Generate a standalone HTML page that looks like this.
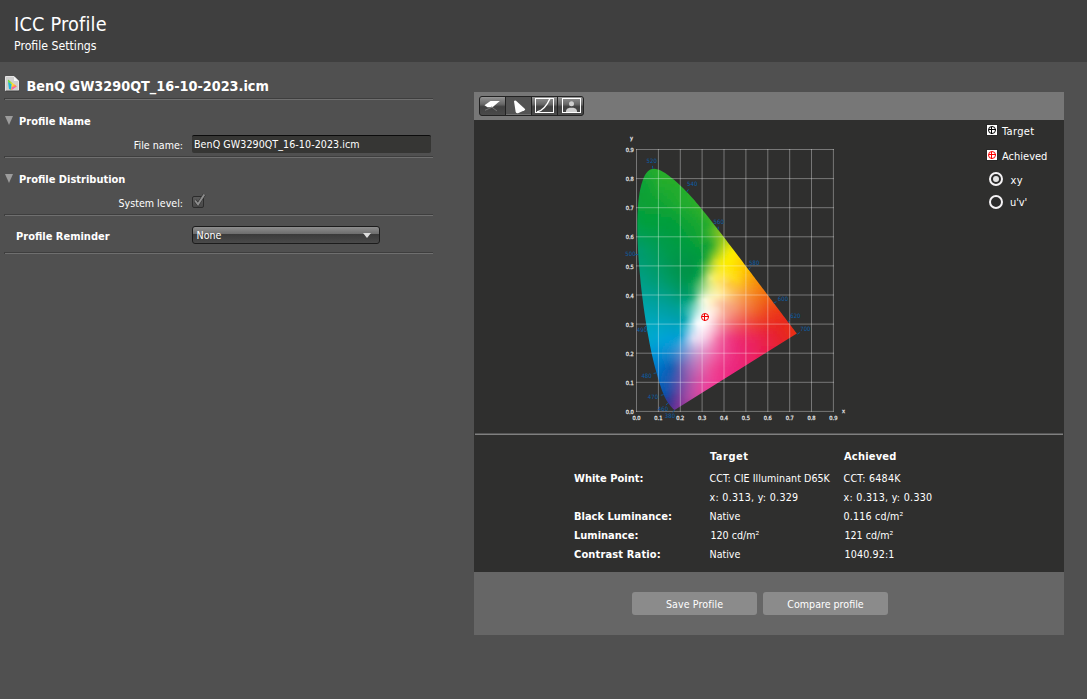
<!DOCTYPE html>
<html><head><meta charset="utf-8"><title>ICC Profile</title>
<style>
*{box-sizing:border-box;margin:0;padding:0}
html,body{width:1087px;height:699px;overflow:hidden;background:#505050}
body{position:relative;font-family:"DejaVu Sans Condensed","Liberation Sans",sans-serif;font-size:10.6px;color:#fff;line-height:13px}
.abs{position:absolute;white-space:nowrap}
.hdr{left:0;top:0;width:1087px;height:62px;background:#3f3f3f}
.t1{left:14px;top:12.5px;font-size:19.7px;line-height:24px;letter-spacing:.2px}
.t2{left:14px;top:39px;font-size:12.2px;line-height:15px}
.b{font-weight:bold;font-size:11px}
.sep{left:4px;width:429px;height:2px;border-top:1px solid #3e3e3e;border-left:1px solid #3e3e3e;background:#6f6f6f}
.lbl{text-align:right;right:904px}
.input{left:192px;top:135px;width:239px;height:18px;background:#363634;border-top:1px solid #0c0c0c;border-radius:2px}
.tri{left:5px;width:0;height:0;border-left:4.7px solid transparent;border-right:4.7px solid transparent;border-top:9px solid #9c9c9c}
.panel{left:474px;top:92px;width:590px;height:543px;background:#666}
.tb{left:474px;top:92px;width:590px;height:28px;background:#777}
.dark{left:474px;top:120px;width:590px;height:452px;background:#2f2f2e}
.cb{left:192px;top:196px;width:12px;height:12px;border:1px solid #2c2c2c;border-radius:2px;background:linear-gradient(#5a5a5a,#484848)}
.dd{left:192px;top:226px;width:188px;height:18px;border:1px solid #1c1c1c;border-radius:3px;background:linear-gradient(#8e8e8e 0,#6c6c6c 44%,#3a3a3a 45%,#4a4a4a 100%)}
.btn{top:592px;width:125px;height:23px;border-radius:3px;background:#8b8b8b;text-align:center;line-height:24px}
.grp{left:479px;top:96px;width:105px;height:20px;border:1px solid #222;border-radius:3px;background:#222;overflow:hidden}
.tbtn{top:0;width:25px;height:18px;background:linear-gradient(#9a9a9a 0,#8c8c8c 6%,#686868 40%,#414141 54%,#4a4a4a 100%)}
.tbtn.sel{background:#535353;border-bottom:1px solid #6e6e6e}
.ico{left:987px;width:10px;height:10px;background:#fff;box-shadow:0 0 0 1px #272727}
.radio{left:989px;width:14px;height:14px;border-radius:50%;border:2px solid #f4f2f4;background:#2b2b2b}
.hsep{left:475px;top:433px;width:588px;height:2px;background:linear-gradient(#565656 50%,#808080 50%)}
svg{position:absolute;overflow:visible}
.ax{font-size:5.7px;fill:#e4e4e4;stroke:#e4e4e4;stroke-width:.25px}
.wl{font-size:6px;fill:#0a5ea8}
</style></head><body>
<div class="abs hdr"></div>
<div class="abs t1">ICC Profile</div>
<div class="abs t2">Profile Settings</div>

<svg style="left:5px;top:76px" width="15" height="16" viewBox="0 0 15 16">
<defs><linearGradient id="ig" x1="0" y1="0" x2="1" y2="1"><stop offset="0" stop-color="#35e02a"/><stop offset=".5" stop-color="#ffe23a"/><stop offset="1" stop-color="#ff2a50"/></linearGradient></defs>
<path d="M0.5,0.5H9L13.5,5V14.5H0.5Z" fill="#cfcfcf" stroke="#e4e4e4"/>
<path d="M1,15H14" stroke="#3a3a3a" stroke-width="1"/>
<path d="M9,0.5V5H13.5Z" fill="#f6f6f6"/>
<path d="M3,3.6L11.8,10.3L6.5,13.9L4,13Z" fill="url(#ig)"/>
<path d="M3.2,6L6.6,8.3L6,13.8L4,13Z" fill="#19b6ea"/>
<path d="M7,11L11.5,10.5L7,13.5Z" fill="#f75cb8"/>
</svg>
<div class="abs b" id="title" style="left:26.5px;top:78px;font-size:14.3px;line-height:16px">BenQ GW3290QT_16-10-2023.icm</div>
<div class="abs sep" style="top:98px"></div>
<div class="abs tri" style="top:115.5px"></div>
<div class="abs b" id="pn" style="left:19px;top:115px">Profile Name</div>
<div class="abs lbl" id="fn" style="top:139px">File name:</div>
<div class="abs input"></div>
<div class="abs" id="fnv" style="left:194px;top:138px;letter-spacing:.07px">BenQ GW3290QT_16-10-2023.icm</div>
<div class="abs sep" style="top:156px"></div>
<div class="abs tri" style="top:173.5px"></div>
<div class="abs b" id="pd" style="left:19px;top:173px">Profile Distribution</div>
<div class="abs lbl" id="sl" style="top:197px">System level:</div>
<div class="abs cb"></div>
<svg style="left:192px;top:192px" width="16" height="16" viewBox="0 0 16 16"><path d="M3,8.5L6,12.3L12.3,2.5" fill="none" stroke="#333" stroke-width="3.2"/><path d="M3,8.5L6,12.3L12.3,2.5" fill="none" stroke="#8e8e8e" stroke-width="1.9"/></svg>
<div class="abs sep" style="top:214px"></div>
<div class="abs b" id="pr" style="left:16px;top:230px">Profile Reminder</div>
<div class="abs dd"></div>
<div class="abs" id="none" style="left:196.5px;top:229px">None</div>
<div class="abs" style="left:363px;top:233px;width:0;height:0;border-left:4px solid transparent;border-right:4px solid transparent;border-top:5px solid #dcdcdc"></div>
<div class="abs sep" style="top:252px"></div>

<div class="abs panel"></div>
<div class="abs tb"></div>
<div class="abs dark"></div>
<div class="abs hsep"></div>

<div class="abs grp">
 <div class="abs tbtn" style="left:0"></div>
 <div class="abs tbtn sel" style="left:26px"></div>
 <div class="abs tbtn" style="left:52px"></div>
 <div class="abs tbtn" style="left:78px"></div>
</div>
<svg style="left:479px;top:96px" width="105" height="20" viewBox="479 96 105 20">
 <path d="M484.5,105.2L490.5,101H499.8L492.5,107.2H487.5Z" fill="#fff"/>
 <path d="M485,110.3L492.5,107M491,106.5L497,111" stroke="#8a8a8a" stroke-width=".7" fill="none"/>
 <path d="M514,101.2Q514.5,100.3 516,100.8L525,109Q525.6,109.8 524.6,110.3L518,113.3Q516.2,113.6 515.7,112Z" fill="#fff"/>
 <rect x="535.5" y="98.5" width="18" height="14" fill="none" stroke="#fff"/>
 <path d="M537,112Q545,110 550,98.5" fill="none" stroke="#fff" stroke-width="1.4"/>
 <rect x="562.5" y="98.5" width="18" height="14" fill="none" stroke="#fff"/>
 <circle cx="571.5" cy="103.8" r="2.5" fill="#cfcfcf"/>
 <path d="M566,112V110.5Q566.5,108.3 569.5,107.8H573.5Q576.5,108.3 577,110.5V112Z" fill="#cfcfcf"/>
</svg>

<!-- chart -->
<svg style="left:600px;top:125px" width="270" height="305" viewBox="600 125 270 305">
<defs>
<clipPath id="loc"><path d="M674.6,410.0 L673.2,409.1 L672.1,407.8 L671.0,406.5 L669.8,405.1 L668.6,403.6 L667.7,402.3 L666.6,400.5 L665.7,399.0 L664.7,397.0 L663.7,394.6 L662.5,391.7 L661.8,390.0 L661.2,388.2 L660.5,386.1 L659.7,383.9 L659.0,381.5 L658.2,378.8 L657.4,375.9 L656.5,372.8 L655.6,369.4 L654.6,365.8 L653.6,361.8 L652.6,357.6 L651.5,353.0 L650.5,348.1 L649.5,342.9 L648.5,337.5 L647.4,331.7 L646.4,325.6 L645.4,319.2 L644.4,312.5 L643.4,305.6 L642.5,298.5 L641.6,291.3 L640.8,284.0 L640.1,276.7 L639.4,269.3 L638.8,262.0 L638.3,254.7 L637.9,247.5 L637.6,240.5 L637.4,233.8 L637.3,227.2 L637.3,220.8 L637.5,214.7 L637.8,208.8 L638.2,203.2 L638.8,198.0 L639.5,193.1 L640.4,188.6 L641.4,184.5 L642.5,180.9 L643.7,177.7 L645.0,175.1 L646.4,173.0 L647.9,171.3 L649.5,170.0 L651.1,169.2 L654.5,168.7 L657.9,169.4 L659.7,170.1 L661.5,171.0 L663.3,172.0 L665.1,173.1 L666.8,174.3 L668.6,175.6 L670.4,176.9 L672.1,178.2 L673.7,179.6 L675.4,181.0 L677.1,182.5 L678.7,183.9 L680.3,185.5 L681.9,187.0 L683.5,188.6 L685.1,190.2 L686.7,191.9 L688.3,193.6 L689.9,195.3 L691.5,197.0 L693.1,198.8 L694.7,200.6 L696.2,202.4 L697.8,204.3 L699.4,206.2 L700.9,208.0 L702.5,209.9 L704.1,211.9 L705.6,213.8 L707.2,215.7 L708.8,217.7 L710.3,219.7 L711.9,221.7 L713.4,223.7 L715.0,225.7 L716.6,227.7 L718.1,229.7 L719.7,231.7 L721.3,233.7 L722.8,235.8 L724.4,237.8 L725.9,239.8 L727.5,241.9 L729.0,243.9 L730.6,245.9 L732.1,248.0 L733.7,250.0 L735.2,252.0 L736.7,254.0 L738.2,256.0 L739.8,258.0 L741.3,260.0 L742.8,262.0 L744.2,264.0 L745.7,265.9 L747.2,267.9 L748.6,269.8 L750.1,271.7 L751.5,273.6 L752.9,275.5 L754.3,277.3 L755.7,279.2 L757.1,281.0 L758.4,282.7 L759.7,284.5 L761.1,286.2 L762.3,287.9 L763.6,289.6 L764.9,291.3 L766.1,292.9 L767.3,294.5 L768.4,296.0 L769.5,297.5 L770.6,298.9 L771.7,300.3 L772.7,301.7 L773.7,303.0 L774.7,304.3 L775.6,305.6 L777.5,308.0 L779.2,310.2 L780.7,312.3 L782.2,314.2 L783.5,316.0 L784.7,317.6 L785.8,319.1 L786.9,320.4 L788.2,322.2 L789.4,323.8 L790.5,325.2 L791.7,326.8 L792.7,328.2 L793.8,329.6 L794.8,331.0 L795.8,332.3 L796.8,333.6Z"/></clipPath>
<filter id="bl" x="-5%" y="-5%" width="110%" height="110%"><feGaussianBlur stdDeviation="0.8"/></filter>
<linearGradient id="cg0" gradientUnits="userSpaceOnUse" x1="648.0" x2="661.0" y1="0" y2="0"><stop offset="0.000" stop-color="#22ac2d"/><stop offset="0.500" stop-color="#25ad2c"/><stop offset="1.000" stop-color="#27ad2b"/></linearGradient>
<linearGradient id="cg1" gradientUnits="userSpaceOnUse" x1="644.0" x2="667.0" y1="0" y2="0"><stop offset="0.000" stop-color="#1ca930"/><stop offset="0.250" stop-color="#1faa2f"/><stop offset="0.500" stop-color="#24ac2c"/><stop offset="0.750" stop-color="#28ad2b"/><stop offset="1.000" stop-color="#29ae2a"/></linearGradient>
<linearGradient id="cg2" gradientUnits="userSpaceOnUse" x1="642.0" x2="671.5" y1="0" y2="0"><stop offset="0.000" stop-color="#18a732"/><stop offset="0.200" stop-color="#1ba931"/><stop offset="0.400" stop-color="#21ab2e"/><stop offset="0.600" stop-color="#26ad2c"/><stop offset="0.800" stop-color="#28ae2a"/><stop offset="1.000" stop-color="#29ae2a"/></linearGradient>
<linearGradient id="cg3" gradientUnits="userSpaceOnUse" x1="640.5" x2="675.0" y1="0" y2="0"><stop offset="0.000" stop-color="#15a634"/><stop offset="0.167" stop-color="#17a633"/><stop offset="0.333" stop-color="#1da930"/><stop offset="0.500" stop-color="#23ac2d"/><stop offset="0.667" stop-color="#26ad2b"/><stop offset="0.833" stop-color="#28ae2a"/><stop offset="1.000" stop-color="#29ae2a"/></linearGradient>
<linearGradient id="cg4" gradientUnits="userSpaceOnUse" x1="639.5" x2="678.5" y1="0" y2="0"><stop offset="0.000" stop-color="#11a436"/><stop offset="0.167" stop-color="#14a535"/><stop offset="0.333" stop-color="#1ca831"/><stop offset="0.500" stop-color="#23ac2d"/><stop offset="0.667" stop-color="#26ad2c"/><stop offset="0.833" stop-color="#27ad2b"/><stop offset="1.000" stop-color="#29ad2a"/></linearGradient>
<linearGradient id="cg5" gradientUnits="userSpaceOnUse" x1="638.5" x2="682.0" y1="0" y2="0"><stop offset="0.000" stop-color="#0ea237"/><stop offset="0.143" stop-color="#10a336"/><stop offset="0.286" stop-color="#17a633"/><stop offset="0.429" stop-color="#21ab2e"/><stop offset="0.571" stop-color="#24ac2c"/><stop offset="0.714" stop-color="#25ac2c"/><stop offset="0.857" stop-color="#27ad2b"/><stop offset="1.000" stop-color="#28ad2a"/></linearGradient>
<linearGradient id="cg6" gradientUnits="userSpaceOnUse" x1="638.0" x2="685.0" y1="0" y2="0"><stop offset="0.000" stop-color="#0da137"/><stop offset="0.125" stop-color="#0da237"/><stop offset="0.250" stop-color="#13a435"/><stop offset="0.375" stop-color="#1da930"/><stop offset="0.500" stop-color="#22ac2d"/><stop offset="0.625" stop-color="#22ac2d"/><stop offset="0.750" stop-color="#24ac2c"/><stop offset="0.875" stop-color="#26ad2b"/><stop offset="1.000" stop-color="#27ad2b"/></linearGradient>
<linearGradient id="cg7" gradientUnits="userSpaceOnUse" x1="637.5" x2="688.0" y1="0" y2="0"><stop offset="0.000" stop-color="#0ba137"/><stop offset="0.125" stop-color="#0da137"/><stop offset="0.250" stop-color="#12a434"/><stop offset="0.375" stop-color="#1ba830"/><stop offset="0.500" stop-color="#1faa2e"/><stop offset="0.625" stop-color="#21ab2e"/><stop offset="0.750" stop-color="#23ac2d"/><stop offset="0.875" stop-color="#25ad2c"/><stop offset="1.000" stop-color="#27ad2b"/></linearGradient>
<linearGradient id="cg8" gradientUnits="userSpaceOnUse" x1="636.5" x2="691.0" y1="0" y2="0"><stop offset="0.000" stop-color="#0aa037"/><stop offset="0.111" stop-color="#0ca137"/><stop offset="0.222" stop-color="#10a335"/><stop offset="0.333" stop-color="#16a632"/><stop offset="0.444" stop-color="#1ba830"/><stop offset="0.556" stop-color="#1eaa2f"/><stop offset="0.667" stop-color="#20ab2e"/><stop offset="0.778" stop-color="#23ac2d"/><stop offset="0.889" stop-color="#24ac2c"/><stop offset="1.000" stop-color="#26ad2c"/></linearGradient>
<linearGradient id="cg9" gradientUnits="userSpaceOnUse" x1="636.5" x2="694.0" y1="0" y2="0"><stop offset="0.000" stop-color="#0aa037"/><stop offset="0.100" stop-color="#0ba036"/><stop offset="0.200" stop-color="#0ea235"/><stop offset="0.300" stop-color="#13a433"/><stop offset="0.400" stop-color="#17a731"/><stop offset="0.500" stop-color="#1ba830"/><stop offset="0.600" stop-color="#1eaa2f"/><stop offset="0.700" stop-color="#21ab2e"/><stop offset="0.800" stop-color="#23ac2d"/><stop offset="0.900" stop-color="#25ac2c"/><stop offset="1.000" stop-color="#28ad2b"/></linearGradient>
<linearGradient id="cg10" gradientUnits="userSpaceOnUse" x1="636.0" x2="696.5" y1="0" y2="0"><stop offset="0.000" stop-color="#09a038"/><stop offset="0.100" stop-color="#0ba036"/><stop offset="0.200" stop-color="#0da235"/><stop offset="0.300" stop-color="#11a333"/><stop offset="0.400" stop-color="#14a532"/><stop offset="0.500" stop-color="#19a830"/><stop offset="0.600" stop-color="#1daa2f"/><stop offset="0.700" stop-color="#21ab2d"/><stop offset="0.800" stop-color="#23ac2d"/><stop offset="0.900" stop-color="#27ad2c"/><stop offset="1.000" stop-color="#2bad2a"/></linearGradient>
<linearGradient id="cg11" gradientUnits="userSpaceOnUse" x1="635.5" x2="699.0" y1="0" y2="0"><stop offset="0.000" stop-color="#09a038"/><stop offset="0.091" stop-color="#0aa037"/><stop offset="0.182" stop-color="#0ca135"/><stop offset="0.273" stop-color="#0ea234"/><stop offset="0.364" stop-color="#10a433"/><stop offset="0.455" stop-color="#14a632"/><stop offset="0.545" stop-color="#19a830"/><stop offset="0.636" stop-color="#1eaa2e"/><stop offset="0.727" stop-color="#23ac2d"/><stop offset="0.818" stop-color="#24ac2d"/><stop offset="0.909" stop-color="#29ad2b"/><stop offset="1.000" stop-color="#2dae2a"/></linearGradient>
<linearGradient id="cg12" gradientUnits="userSpaceOnUse" x1="635.5" x2="701.5" y1="0" y2="0"><stop offset="0.000" stop-color="#08a039"/><stop offset="0.091" stop-color="#0aa038"/><stop offset="0.182" stop-color="#0ba136"/><stop offset="0.273" stop-color="#0ca235"/><stop offset="0.364" stop-color="#0fa334"/><stop offset="0.455" stop-color="#13a533"/><stop offset="0.545" stop-color="#18a731"/><stop offset="0.636" stop-color="#1eaa2f"/><stop offset="0.727" stop-color="#22ab2d"/><stop offset="0.818" stop-color="#24ac2d"/><stop offset="0.909" stop-color="#2bad2b"/><stop offset="1.000" stop-color="#2fae29"/></linearGradient>
<linearGradient id="cg13" gradientUnits="userSpaceOnUse" x1="635.0" x2="704.0" y1="0" y2="0"><stop offset="0.000" stop-color="#07a03b"/><stop offset="0.083" stop-color="#08a039"/><stop offset="0.167" stop-color="#09a037"/><stop offset="0.250" stop-color="#0ba136"/><stop offset="0.333" stop-color="#0ca235"/><stop offset="0.417" stop-color="#0fa434"/><stop offset="0.500" stop-color="#13a533"/><stop offset="0.583" stop-color="#18a831"/><stop offset="0.667" stop-color="#1daa2f"/><stop offset="0.750" stop-color="#20ab2e"/><stop offset="0.833" stop-color="#25ac2c"/><stop offset="0.917" stop-color="#2dae2a"/><stop offset="1.000" stop-color="#31ae29"/></linearGradient>
<linearGradient id="cg14" gradientUnits="userSpaceOnUse" x1="635.0" x2="706.5" y1="0" y2="0"><stop offset="0.000" stop-color="#06a03c"/><stop offset="0.083" stop-color="#07a03b"/><stop offset="0.167" stop-color="#08a038"/><stop offset="0.250" stop-color="#09a137"/><stop offset="0.333" stop-color="#0aa236"/><stop offset="0.417" stop-color="#0da335"/><stop offset="0.500" stop-color="#10a534"/><stop offset="0.583" stop-color="#15a732"/><stop offset="0.667" stop-color="#1aa930"/><stop offset="0.750" stop-color="#1faa2f"/><stop offset="0.833" stop-color="#25ac2d"/><stop offset="0.917" stop-color="#2eae2a"/><stop offset="1.000" stop-color="#33af29"/></linearGradient>
<linearGradient id="cg15" gradientUnits="userSpaceOnUse" x1="635.0" x2="709.0" y1="0" y2="0"><stop offset="0.000" stop-color="#059f3e"/><stop offset="0.083" stop-color="#06a03c"/><stop offset="0.167" stop-color="#07a039"/><stop offset="0.250" stop-color="#08a138"/><stop offset="0.333" stop-color="#08a137"/><stop offset="0.417" stop-color="#0aa236"/><stop offset="0.500" stop-color="#0ea435"/><stop offset="0.583" stop-color="#13a633"/><stop offset="0.667" stop-color="#18a731"/><stop offset="0.750" stop-color="#1ea92f"/><stop offset="0.833" stop-color="#25ac2d"/><stop offset="0.917" stop-color="#2fae2a"/><stop offset="1.000" stop-color="#35af28"/></linearGradient>
<linearGradient id="cg16" gradientUnits="userSpaceOnUse" x1="634.5" x2="711.5" y1="0" y2="0"><stop offset="0.000" stop-color="#049f40"/><stop offset="0.077" stop-color="#05a03e"/><stop offset="0.154" stop-color="#06a03a"/><stop offset="0.231" stop-color="#06a039"/><stop offset="0.308" stop-color="#06a038"/><stop offset="0.385" stop-color="#07a138"/><stop offset="0.462" stop-color="#09a237"/><stop offset="0.538" stop-color="#0da335"/><stop offset="0.615" stop-color="#12a533"/><stop offset="0.692" stop-color="#18a731"/><stop offset="0.769" stop-color="#1ea92f"/><stop offset="0.846" stop-color="#26ac2d"/><stop offset="0.923" stop-color="#30ae2a"/><stop offset="1.000" stop-color="#39b028"/></linearGradient>
<linearGradient id="cg17" gradientUnits="userSpaceOnUse" x1="634.5" x2="713.5" y1="0" y2="0"><stop offset="0.000" stop-color="#049f43"/><stop offset="0.077" stop-color="#049f40"/><stop offset="0.154" stop-color="#06a03b"/><stop offset="0.231" stop-color="#05a03a"/><stop offset="0.308" stop-color="#04a03a"/><stop offset="0.385" stop-color="#04a03a"/><stop offset="0.462" stop-color="#06a039"/><stop offset="0.538" stop-color="#0aa236"/><stop offset="0.615" stop-color="#10a434"/><stop offset="0.692" stop-color="#16a632"/><stop offset="0.769" stop-color="#1ca830"/><stop offset="0.846" stop-color="#24ab2d"/><stop offset="0.923" stop-color="#31ae2a"/><stop offset="1.000" stop-color="#3cb028"/></linearGradient>
<linearGradient id="cg18" gradientUnits="userSpaceOnUse" x1="634.5" x2="716.0" y1="0" y2="0"><stop offset="0.000" stop-color="#039f45"/><stop offset="0.071" stop-color="#049f42"/><stop offset="0.143" stop-color="#05a03d"/><stop offset="0.214" stop-color="#04a03c"/><stop offset="0.286" stop-color="#039f3c"/><stop offset="0.357" stop-color="#029f3c"/><stop offset="0.429" stop-color="#019e3b"/><stop offset="0.500" stop-color="#06a039"/><stop offset="0.571" stop-color="#0ba236"/><stop offset="0.643" stop-color="#10a434"/><stop offset="0.714" stop-color="#16a631"/><stop offset="0.786" stop-color="#1ca82f"/><stop offset="0.857" stop-color="#24ab2d"/><stop offset="0.929" stop-color="#37af2a"/><stop offset="1.000" stop-color="#47b327"/></linearGradient>
<linearGradient id="cg19" gradientUnits="userSpaceOnUse" x1="634.5" x2="718.5" y1="0" y2="0"><stop offset="0.000" stop-color="#029f48"/><stop offset="0.071" stop-color="#039f45"/><stop offset="0.143" stop-color="#049f40"/><stop offset="0.214" stop-color="#039f3e"/><stop offset="0.286" stop-color="#029e3e"/><stop offset="0.357" stop-color="#009e3e"/><stop offset="0.429" stop-color="#009e3c"/><stop offset="0.500" stop-color="#05a03a"/><stop offset="0.571" stop-color="#09a137"/><stop offset="0.643" stop-color="#0fa334"/><stop offset="0.714" stop-color="#15a632"/><stop offset="0.786" stop-color="#1ca830"/><stop offset="0.857" stop-color="#24ab2e"/><stop offset="0.929" stop-color="#45b328"/><stop offset="1.000" stop-color="#5ab725"/></linearGradient>
<linearGradient id="cg20" gradientUnits="userSpaceOnUse" x1="634.5" x2="720.5" y1="0" y2="0"><stop offset="0.000" stop-color="#019e4c"/><stop offset="0.071" stop-color="#029f49"/><stop offset="0.143" stop-color="#039f44"/><stop offset="0.214" stop-color="#029f42"/><stop offset="0.286" stop-color="#019e41"/><stop offset="0.357" stop-color="#009d3f"/><stop offset="0.429" stop-color="#009e3d"/><stop offset="0.500" stop-color="#039f3b"/><stop offset="0.571" stop-color="#08a138"/><stop offset="0.643" stop-color="#0da335"/><stop offset="0.714" stop-color="#14a532"/><stop offset="0.786" stop-color="#1da830"/><stop offset="0.857" stop-color="#2ead2d"/><stop offset="0.929" stop-color="#59b827"/><stop offset="1.000" stop-color="#6ebc23"/></linearGradient>
<linearGradient id="cg21" gradientUnits="userSpaceOnUse" x1="634.5" x2="723.0" y1="0" y2="0"><stop offset="0.000" stop-color="#019e50"/><stop offset="0.067" stop-color="#019e4d"/><stop offset="0.133" stop-color="#029e49"/><stop offset="0.200" stop-color="#019e46"/><stop offset="0.267" stop-color="#009e44"/><stop offset="0.333" stop-color="#009d42"/><stop offset="0.400" stop-color="#009d3f"/><stop offset="0.467" stop-color="#019e3d"/><stop offset="0.533" stop-color="#059f3a"/><stop offset="0.600" stop-color="#09a137"/><stop offset="0.667" stop-color="#0fa334"/><stop offset="0.733" stop-color="#18a632"/><stop offset="0.800" stop-color="#27ab2f"/><stop offset="0.867" stop-color="#49b42a"/><stop offset="0.933" stop-color="#72bd24"/><stop offset="1.000" stop-color="#81c021"/></linearGradient>
<linearGradient id="cg22" gradientUnits="userSpaceOnUse" x1="634.5" x2="725.5" y1="0" y2="0"><stop offset="0.000" stop-color="#009e54"/><stop offset="0.067" stop-color="#019e51"/><stop offset="0.133" stop-color="#019e4d"/><stop offset="0.200" stop-color="#019e49"/><stop offset="0.267" stop-color="#009d46"/><stop offset="0.333" stop-color="#009d43"/><stop offset="0.400" stop-color="#009d41"/><stop offset="0.467" stop-color="#019e3e"/><stop offset="0.533" stop-color="#049f3b"/><stop offset="0.600" stop-color="#09a138"/><stop offset="0.667" stop-color="#10a334"/><stop offset="0.733" stop-color="#1ba731"/><stop offset="0.800" stop-color="#30ad2e"/><stop offset="0.867" stop-color="#59b829"/><stop offset="0.933" stop-color="#7fc121"/><stop offset="1.000" stop-color="#8fc51d"/></linearGradient>
<linearGradient id="cg23" gradientUnits="userSpaceOnUse" x1="634.5" x2="727.5" y1="0" y2="0"><stop offset="0.000" stop-color="#009d58"/><stop offset="0.062" stop-color="#009d56"/><stop offset="0.125" stop-color="#019d52"/><stop offset="0.188" stop-color="#009d4d"/><stop offset="0.250" stop-color="#009d4a"/><stop offset="0.312" stop-color="#009d46"/><stop offset="0.375" stop-color="#009c43"/><stop offset="0.438" stop-color="#009d40"/><stop offset="0.500" stop-color="#019d3d"/><stop offset="0.562" stop-color="#059f3a"/><stop offset="0.625" stop-color="#0ba137"/><stop offset="0.688" stop-color="#14a433"/><stop offset="0.750" stop-color="#21a831"/><stop offset="0.812" stop-color="#3db02d"/><stop offset="0.875" stop-color="#66bb27"/><stop offset="0.938" stop-color="#8ec61e"/><stop offset="1.000" stop-color="#9eca1a"/></linearGradient>
<linearGradient id="cg24" gradientUnits="userSpaceOnUse" x1="634.5" x2="730.0" y1="0" y2="0"><stop offset="0.000" stop-color="#009d5d"/><stop offset="0.062" stop-color="#009d5b"/><stop offset="0.125" stop-color="#009d56"/><stop offset="0.188" stop-color="#009d51"/><stop offset="0.250" stop-color="#009d4c"/><stop offset="0.312" stop-color="#009c48"/><stop offset="0.375" stop-color="#009c44"/><stop offset="0.438" stop-color="#009c41"/><stop offset="0.500" stop-color="#009d3e"/><stop offset="0.562" stop-color="#049e3b"/><stop offset="0.625" stop-color="#0ba137"/><stop offset="0.688" stop-color="#16a433"/><stop offset="0.750" stop-color="#22a831"/><stop offset="0.812" stop-color="#44b12d"/><stop offset="0.875" stop-color="#76c025"/><stop offset="0.938" stop-color="#a2cc1a"/><stop offset="1.000" stop-color="#b3d115"/></linearGradient>
<linearGradient id="cg25" gradientUnits="userSpaceOnUse" x1="635.0" x2="732.0" y1="0" y2="0"><stop offset="0.000" stop-color="#009c61"/><stop offset="0.062" stop-color="#009c5f"/><stop offset="0.125" stop-color="#009d5a"/><stop offset="0.188" stop-color="#009d54"/><stop offset="0.250" stop-color="#009c4e"/><stop offset="0.312" stop-color="#009c49"/><stop offset="0.375" stop-color="#009c45"/><stop offset="0.438" stop-color="#009c42"/><stop offset="0.500" stop-color="#009c3f"/><stop offset="0.562" stop-color="#039e3c"/><stop offset="0.625" stop-color="#0aa038"/><stop offset="0.688" stop-color="#18a532"/><stop offset="0.750" stop-color="#1ea533"/><stop offset="0.812" stop-color="#4db42c"/><stop offset="0.875" stop-color="#89c623"/><stop offset="0.938" stop-color="#b8d416"/><stop offset="1.000" stop-color="#c8d80f"/></linearGradient>
<linearGradient id="cg26" gradientUnits="userSpaceOnUse" x1="635.0" x2="734.5" y1="0" y2="0"><stop offset="0.000" stop-color="#009c65"/><stop offset="0.059" stop-color="#009c64"/><stop offset="0.118" stop-color="#009d5e"/><stop offset="0.176" stop-color="#009d58"/><stop offset="0.235" stop-color="#009c52"/><stop offset="0.294" stop-color="#009c4c"/><stop offset="0.353" stop-color="#009b48"/><stop offset="0.412" stop-color="#009b44"/><stop offset="0.471" stop-color="#009b41"/><stop offset="0.529" stop-color="#009c3e"/><stop offset="0.588" stop-color="#059e3b"/><stop offset="0.647" stop-color="#0ba037"/><stop offset="0.706" stop-color="#0fa037"/><stop offset="0.765" stop-color="#2daa30"/><stop offset="0.824" stop-color="#72bf28"/><stop offset="0.882" stop-color="#add21d"/><stop offset="0.941" stop-color="#d3dd0e"/><stop offset="1.000" stop-color="#dfdf08"/></linearGradient>
<linearGradient id="cg27" gradientUnits="userSpaceOnUse" x1="635.0" x2="737.0" y1="0" y2="0"><stop offset="0.000" stop-color="#009b6a"/><stop offset="0.059" stop-color="#009c69"/><stop offset="0.118" stop-color="#009d62"/><stop offset="0.176" stop-color="#009d5a"/><stop offset="0.235" stop-color="#009c54"/><stop offset="0.294" stop-color="#009c4d"/><stop offset="0.353" stop-color="#009b48"/><stop offset="0.412" stop-color="#009a45"/><stop offset="0.471" stop-color="#009a42"/><stop offset="0.529" stop-color="#009b40"/><stop offset="0.588" stop-color="#029c3c"/><stop offset="0.647" stop-color="#089e39"/><stop offset="0.706" stop-color="#1aa435"/><stop offset="0.765" stop-color="#4db42d"/><stop offset="0.824" stop-color="#98cb27"/><stop offset="0.882" stop-color="#cddd14"/><stop offset="0.941" stop-color="#ebe505"/><stop offset="1.000" stop-color="#f0e402"/></linearGradient>
<linearGradient id="cg28" gradientUnits="userSpaceOnUse" x1="635.0" x2="739.0" y1="0" y2="0"><stop offset="0.000" stop-color="#009b6d"/><stop offset="0.059" stop-color="#009b6e"/><stop offset="0.118" stop-color="#009d64"/><stop offset="0.176" stop-color="#009c5d"/><stop offset="0.235" stop-color="#009c56"/><stop offset="0.294" stop-color="#009b4f"/><stop offset="0.353" stop-color="#009a4a"/><stop offset="0.412" stop-color="#009946"/><stop offset="0.471" stop-color="#009943"/><stop offset="0.529" stop-color="#009a41"/><stop offset="0.588" stop-color="#009b3e"/><stop offset="0.647" stop-color="#099e39"/><stop offset="0.706" stop-color="#2fab33"/><stop offset="0.765" stop-color="#72c02a"/><stop offset="0.824" stop-color="#b7d61e"/><stop offset="0.882" stop-color="#e5e60b"/><stop offset="0.941" stop-color="#faeb00"/><stop offset="1.000" stop-color="#fae400"/></linearGradient>
<linearGradient id="cg29" gradientUnits="userSpaceOnUse" x1="635.5" x2="741.5" y1="0" y2="0"><stop offset="0.000" stop-color="#009b6e"/><stop offset="0.056" stop-color="#009b6d"/><stop offset="0.111" stop-color="#009c67"/><stop offset="0.167" stop-color="#009c60"/><stop offset="0.222" stop-color="#009b58"/><stop offset="0.278" stop-color="#009b52"/><stop offset="0.333" stop-color="#009a4c"/><stop offset="0.389" stop-color="#009848"/><stop offset="0.444" stop-color="#009845"/><stop offset="0.500" stop-color="#009843"/><stop offset="0.556" stop-color="#009940"/><stop offset="0.611" stop-color="#009b3d"/><stop offset="0.667" stop-color="#24a735"/><stop offset="0.722" stop-color="#69bd2c"/><stop offset="0.778" stop-color="#aed421"/><stop offset="0.833" stop-color="#dee50f"/><stop offset="0.889" stop-color="#fbec01"/><stop offset="0.944" stop-color="#ffe500"/><stop offset="1.000" stop-color="#fdde00"/></linearGradient>
<linearGradient id="cg30" gradientUnits="userSpaceOnUse" x1="635.5" x2="743.5" y1="0" y2="0"><stop offset="0.000" stop-color="#009b70"/><stop offset="0.056" stop-color="#009b6f"/><stop offset="0.111" stop-color="#009c69"/><stop offset="0.167" stop-color="#009c62"/><stop offset="0.222" stop-color="#009b5a"/><stop offset="0.278" stop-color="#009a53"/><stop offset="0.333" stop-color="#00994d"/><stop offset="0.389" stop-color="#009749"/><stop offset="0.444" stop-color="#009745"/><stop offset="0.500" stop-color="#009743"/><stop offset="0.556" stop-color="#009841"/><stop offset="0.611" stop-color="#029c3e"/><stop offset="0.667" stop-color="#3cae32"/><stop offset="0.722" stop-color="#93cb2b"/><stop offset="0.778" stop-color="#d0e019"/><stop offset="0.833" stop-color="#f1eb06"/><stop offset="0.889" stop-color="#ffea00"/><stop offset="0.944" stop-color="#ffde00"/><stop offset="1.000" stop-color="#fed700"/></linearGradient>
<linearGradient id="cg31" gradientUnits="userSpaceOnUse" x1="636.0" x2="746.0" y1="0" y2="0"><stop offset="0.000" stop-color="#009c72"/><stop offset="0.056" stop-color="#009c70"/><stop offset="0.111" stop-color="#009c6a"/><stop offset="0.167" stop-color="#009c63"/><stop offset="0.222" stop-color="#009b5c"/><stop offset="0.278" stop-color="#009954"/><stop offset="0.333" stop-color="#00984e"/><stop offset="0.389" stop-color="#009649"/><stop offset="0.444" stop-color="#009546"/><stop offset="0.500" stop-color="#009643"/><stop offset="0.556" stop-color="#009a41"/><stop offset="0.611" stop-color="#1aa43d"/><stop offset="0.667" stop-color="#69bd31"/><stop offset="0.722" stop-color="#c7dc2d"/><stop offset="0.778" stop-color="#ede90c"/><stop offset="0.833" stop-color="#feee00"/><stop offset="0.889" stop-color="#ffe500"/><stop offset="0.944" stop-color="#ffd600"/><stop offset="1.000" stop-color="#fed000"/></linearGradient>
<linearGradient id="cg32" gradientUnits="userSpaceOnUse" x1="636.0" x2="748.0" y1="0" y2="0"><stop offset="0.000" stop-color="#009c75"/><stop offset="0.053" stop-color="#009c73"/><stop offset="0.105" stop-color="#009c6d"/><stop offset="0.158" stop-color="#009c66"/><stop offset="0.211" stop-color="#009b5f"/><stop offset="0.263" stop-color="#009958"/><stop offset="0.316" stop-color="#009851"/><stop offset="0.368" stop-color="#00964c"/><stop offset="0.421" stop-color="#009447"/><stop offset="0.474" stop-color="#009544"/><stop offset="0.526" stop-color="#009843"/><stop offset="0.579" stop-color="#15a241"/><stop offset="0.632" stop-color="#57b83c"/><stop offset="0.684" stop-color="#afd435"/><stop offset="0.737" stop-color="#e9e81c"/><stop offset="0.789" stop-color="#fced04"/><stop offset="0.842" stop-color="#ffe900"/><stop offset="0.895" stop-color="#ffdd00"/><stop offset="0.947" stop-color="#ffcf00"/><stop offset="1.000" stop-color="#fec900"/></linearGradient>
<linearGradient id="cg33" gradientUnits="userSpaceOnUse" x1="636.0" x2="750.5" y1="0" y2="0"><stop offset="0.000" stop-color="#009c78"/><stop offset="0.053" stop-color="#009c75"/><stop offset="0.105" stop-color="#009c6f"/><stop offset="0.158" stop-color="#009c68"/><stop offset="0.211" stop-color="#009b61"/><stop offset="0.263" stop-color="#00995a"/><stop offset="0.316" stop-color="#009753"/><stop offset="0.368" stop-color="#00954c"/><stop offset="0.421" stop-color="#009448"/><stop offset="0.474" stop-color="#009445"/><stop offset="0.526" stop-color="#009a44"/><stop offset="0.579" stop-color="#2eab44"/><stop offset="0.632" stop-color="#80c643"/><stop offset="0.684" stop-color="#cddf38"/><stop offset="0.737" stop-color="#f6eb1b"/><stop offset="0.789" stop-color="#ffeb07"/><stop offset="0.842" stop-color="#ffe201"/><stop offset="0.895" stop-color="#ffd600"/><stop offset="0.947" stop-color="#fec800"/><stop offset="1.000" stop-color="#fdc000"/></linearGradient>
<linearGradient id="cg34" gradientUnits="userSpaceOnUse" x1="636.5" x2="752.5" y1="0" y2="0"><stop offset="0.000" stop-color="#009d7a"/><stop offset="0.053" stop-color="#009d77"/><stop offset="0.105" stop-color="#009c71"/><stop offset="0.158" stop-color="#009c6a"/><stop offset="0.211" stop-color="#009b63"/><stop offset="0.263" stop-color="#00995b"/><stop offset="0.316" stop-color="#009754"/><stop offset="0.368" stop-color="#00944d"/><stop offset="0.421" stop-color="#009348"/><stop offset="0.474" stop-color="#009545"/><stop offset="0.526" stop-color="#039d46"/><stop offset="0.579" stop-color="#4cb54b"/><stop offset="0.632" stop-color="#a6d34e"/><stop offset="0.684" stop-color="#e3e63d"/><stop offset="0.737" stop-color="#fceb23"/><stop offset="0.789" stop-color="#ffe711"/><stop offset="0.842" stop-color="#ffde06"/><stop offset="0.895" stop-color="#ffd003"/><stop offset="0.947" stop-color="#fdbf01"/><stop offset="1.000" stop-color="#fcb700"/></linearGradient>
<linearGradient id="cg35" gradientUnits="userSpaceOnUse" x1="636.5" x2="755.0" y1="0" y2="0"><stop offset="0.000" stop-color="#009d7e"/><stop offset="0.050" stop-color="#009d7b"/><stop offset="0.100" stop-color="#009d74"/><stop offset="0.150" stop-color="#009c6e"/><stop offset="0.200" stop-color="#009b67"/><stop offset="0.250" stop-color="#009a5f"/><stop offset="0.300" stop-color="#009757"/><stop offset="0.350" stop-color="#009550"/><stop offset="0.400" stop-color="#00944a"/><stop offset="0.450" stop-color="#009447"/><stop offset="0.500" stop-color="#009948"/><stop offset="0.550" stop-color="#37af4e"/><stop offset="0.600" stop-color="#9cd05b"/><stop offset="0.650" stop-color="#dee655"/><stop offset="0.700" stop-color="#f9eb3a"/><stop offset="0.750" stop-color="#ffe828"/><stop offset="0.800" stop-color="#ffe115"/><stop offset="0.850" stop-color="#ffd60a"/><stop offset="0.900" stop-color="#fec506"/><stop offset="0.950" stop-color="#fbb403"/><stop offset="1.000" stop-color="#faac01"/></linearGradient>
<linearGradient id="cg36" gradientUnits="userSpaceOnUse" x1="637.0" x2="757.0" y1="0" y2="0"><stop offset="0.000" stop-color="#009d81"/><stop offset="0.050" stop-color="#009d7e"/><stop offset="0.100" stop-color="#009d77"/><stop offset="0.150" stop-color="#009c70"/><stop offset="0.200" stop-color="#009b69"/><stop offset="0.250" stop-color="#009a61"/><stop offset="0.300" stop-color="#009859"/><stop offset="0.350" stop-color="#009551"/><stop offset="0.400" stop-color="#00944b"/><stop offset="0.450" stop-color="#009748"/><stop offset="0.500" stop-color="#0a9f4e"/><stop offset="0.550" stop-color="#5dbc58"/><stop offset="0.600" stop-color="#c8e173"/><stop offset="0.650" stop-color="#f3ed5a"/><stop offset="0.700" stop-color="#fee844"/><stop offset="0.750" stop-color="#ffe433"/><stop offset="0.800" stop-color="#ffdd19"/><stop offset="0.850" stop-color="#ffd00e"/><stop offset="0.900" stop-color="#fcbc0a"/><stop offset="0.950" stop-color="#faa906"/><stop offset="1.000" stop-color="#f8a204"/></linearGradient>
<linearGradient id="cg37" gradientUnits="userSpaceOnUse" x1="637.5" x2="759.5" y1="0" y2="0"><stop offset="0.000" stop-color="#009e84"/><stop offset="0.050" stop-color="#009e81"/><stop offset="0.100" stop-color="#009d79"/><stop offset="0.150" stop-color="#009d73"/><stop offset="0.200" stop-color="#009c6c"/><stop offset="0.250" stop-color="#009b63"/><stop offset="0.300" stop-color="#00985b"/><stop offset="0.350" stop-color="#009553"/><stop offset="0.400" stop-color="#00954c"/><stop offset="0.450" stop-color="#009b4b"/><stop offset="0.500" stop-color="#2fad59"/><stop offset="0.550" stop-color="#8ccc6b"/><stop offset="0.600" stop-color="#e6ed85"/><stop offset="0.650" stop-color="#fced50"/><stop offset="0.700" stop-color="#fee456"/><stop offset="0.750" stop-color="#ffda35"/><stop offset="0.800" stop-color="#ffda1a"/><stop offset="0.850" stop-color="#fdc513"/><stop offset="0.900" stop-color="#faaf0e"/><stop offset="0.950" stop-color="#f79d08"/><stop offset="1.000" stop-color="#f69606"/></linearGradient>
<linearGradient id="cg38" gradientUnits="userSpaceOnUse" x1="637.5" x2="761.5" y1="0" y2="0"><stop offset="0.000" stop-color="#009e88"/><stop offset="0.048" stop-color="#009e84"/><stop offset="0.095" stop-color="#009e7d"/><stop offset="0.143" stop-color="#009d77"/><stop offset="0.190" stop-color="#009c71"/><stop offset="0.238" stop-color="#009b69"/><stop offset="0.286" stop-color="#009960"/><stop offset="0.333" stop-color="#009658"/><stop offset="0.381" stop-color="#009651"/><stop offset="0.429" stop-color="#019c4e"/><stop offset="0.476" stop-color="#2dac5c"/><stop offset="0.524" stop-color="#77c770"/><stop offset="0.571" stop-color="#c9e282"/><stop offset="0.619" stop-color="#f5ed71"/><stop offset="0.667" stop-color="#fedf60"/><stop offset="0.714" stop-color="#fddd59"/><stop offset="0.762" stop-color="#fecd29"/><stop offset="0.810" stop-color="#fecd1f"/><stop offset="0.857" stop-color="#fbb619"/><stop offset="0.905" stop-color="#f8a212"/><stop offset="0.952" stop-color="#f6930b"/><stop offset="1.000" stop-color="#f58e07"/></linearGradient>
<linearGradient id="cg39" gradientUnits="userSpaceOnUse" x1="638.0" x2="764.0" y1="0" y2="0"><stop offset="0.000" stop-color="#009f8a"/><stop offset="0.048" stop-color="#009f87"/><stop offset="0.095" stop-color="#009e81"/><stop offset="0.143" stop-color="#009e7b"/><stop offset="0.190" stop-color="#009d75"/><stop offset="0.238" stop-color="#009b6d"/><stop offset="0.286" stop-color="#009964"/><stop offset="0.333" stop-color="#00975b"/><stop offset="0.381" stop-color="#009855"/><stop offset="0.429" stop-color="#11a258"/><stop offset="0.476" stop-color="#4bb86b"/><stop offset="0.524" stop-color="#98d380"/><stop offset="0.571" stop-color="#d9e88a"/><stop offset="0.619" stop-color="#f8ea7b"/><stop offset="0.667" stop-color="#fedf6e"/><stop offset="0.714" stop-color="#fdca4c"/><stop offset="0.762" stop-color="#fdc731"/><stop offset="0.810" stop-color="#fcbd27"/><stop offset="0.857" stop-color="#f9a91e"/><stop offset="0.905" stop-color="#f79815"/><stop offset="0.952" stop-color="#f58a0c"/><stop offset="1.000" stop-color="#f48508"/></linearGradient>
<linearGradient id="cg40" gradientUnits="userSpaceOnUse" x1="638.0" x2="766.5" y1="0" y2="0"><stop offset="0.000" stop-color="#009f8d"/><stop offset="0.048" stop-color="#009f8b"/><stop offset="0.095" stop-color="#009f86"/><stop offset="0.143" stop-color="#009e80"/><stop offset="0.190" stop-color="#009d79"/><stop offset="0.238" stop-color="#009c72"/><stop offset="0.286" stop-color="#009968"/><stop offset="0.333" stop-color="#00975f"/><stop offset="0.381" stop-color="#009a5a"/><stop offset="0.429" stop-color="#1fa863"/><stop offset="0.476" stop-color="#67c37b"/><stop offset="0.524" stop-color="#b2dd90"/><stop offset="0.571" stop-color="#e5ec94"/><stop offset="0.619" stop-color="#fbea88"/><stop offset="0.667" stop-color="#fedc74"/><stop offset="0.714" stop-color="#fdc851"/><stop offset="0.762" stop-color="#fcbf3c"/><stop offset="0.810" stop-color="#fab02f"/><stop offset="0.857" stop-color="#f79e22"/><stop offset="0.905" stop-color="#f58e17"/><stop offset="0.952" stop-color="#f4810c"/><stop offset="1.000" stop-color="#f37c08"/></linearGradient>
<linearGradient id="cg41" gradientUnits="userSpaceOnUse" x1="638.5" x2="768.5" y1="0" y2="0"><stop offset="0.000" stop-color="#00a090"/><stop offset="0.045" stop-color="#00a08f"/><stop offset="0.091" stop-color="#009f8b"/><stop offset="0.136" stop-color="#009f86"/><stop offset="0.182" stop-color="#009e80"/><stop offset="0.227" stop-color="#009d79"/><stop offset="0.273" stop-color="#009a70"/><stop offset="0.318" stop-color="#009866"/><stop offset="0.364" stop-color="#009960"/><stop offset="0.409" stop-color="#13a465"/><stop offset="0.455" stop-color="#5dc080"/><stop offset="0.500" stop-color="#acdc9a"/><stop offset="0.545" stop-color="#dfeca2"/><stop offset="0.591" stop-color="#f7ef9c"/><stop offset="0.636" stop-color="#ffe68c"/><stop offset="0.682" stop-color="#fed26e"/><stop offset="0.727" stop-color="#fcc153"/><stop offset="0.773" stop-color="#fab242"/><stop offset="0.818" stop-color="#f8a232"/><stop offset="0.864" stop-color="#f69224"/><stop offset="0.909" stop-color="#f48417"/><stop offset="0.955" stop-color="#f2780d"/><stop offset="1.000" stop-color="#f2720a"/></linearGradient>
<linearGradient id="cg42" gradientUnits="userSpaceOnUse" x1="639.0" x2="771.0" y1="0" y2="0"><stop offset="0.000" stop-color="#00a095"/><stop offset="0.045" stop-color="#00a094"/><stop offset="0.091" stop-color="#00a090"/><stop offset="0.136" stop-color="#009f8b"/><stop offset="0.182" stop-color="#009e85"/><stop offset="0.227" stop-color="#009d7f"/><stop offset="0.273" stop-color="#009b75"/><stop offset="0.318" stop-color="#00996b"/><stop offset="0.364" stop-color="#009a65"/><stop offset="0.409" stop-color="#1ea96f"/><stop offset="0.455" stop-color="#81ce96"/><stop offset="0.500" stop-color="#cce9b0"/><stop offset="0.545" stop-color="#eff1af"/><stop offset="0.591" stop-color="#fcf0a7"/><stop offset="0.636" stop-color="#ffe291"/><stop offset="0.682" stop-color="#fccc71"/><stop offset="0.727" stop-color="#fab85a"/><stop offset="0.773" stop-color="#f8a747"/><stop offset="0.818" stop-color="#f69635"/><stop offset="0.864" stop-color="#f48824"/><stop offset="0.909" stop-color="#f37a17"/><stop offset="0.955" stop-color="#f16d0e"/><stop offset="1.000" stop-color="#f0690c"/></linearGradient>
<linearGradient id="cg43" gradientUnits="userSpaceOnUse" x1="639.5" x2="773.0" y1="0" y2="0"><stop offset="0.000" stop-color="#00a19a"/><stop offset="0.045" stop-color="#00a199"/><stop offset="0.091" stop-color="#00a095"/><stop offset="0.136" stop-color="#009f8f"/><stop offset="0.182" stop-color="#009f8a"/><stop offset="0.227" stop-color="#009e84"/><stop offset="0.273" stop-color="#009b7a"/><stop offset="0.318" stop-color="#009b72"/><stop offset="0.364" stop-color="#009d6c"/><stop offset="0.409" stop-color="#35b37f"/><stop offset="0.455" stop-color="#addeb0"/><stop offset="0.500" stop-color="#e8f3c4"/><stop offset="0.545" stop-color="#f9f1b7"/><stop offset="0.591" stop-color="#feebac"/><stop offset="0.636" stop-color="#fdd68f"/><stop offset="0.682" stop-color="#fbc173"/><stop offset="0.727" stop-color="#f8ae5f"/><stop offset="0.773" stop-color="#f79d49"/><stop offset="0.818" stop-color="#f58d35"/><stop offset="0.864" stop-color="#f37f25"/><stop offset="0.909" stop-color="#f17118"/><stop offset="0.955" stop-color="#f06510"/><stop offset="1.000" stop-color="#f0600e"/></linearGradient>
<linearGradient id="cg44" gradientUnits="userSpaceOnUse" x1="639.5" x2="775.5" y1="0" y2="0"><stop offset="0.000" stop-color="#00a29f"/><stop offset="0.043" stop-color="#00a29e"/><stop offset="0.087" stop-color="#00a19a"/><stop offset="0.130" stop-color="#00a095"/><stop offset="0.174" stop-color="#009f90"/><stop offset="0.217" stop-color="#009e8b"/><stop offset="0.261" stop-color="#009d83"/><stop offset="0.304" stop-color="#009d7d"/><stop offset="0.348" stop-color="#04a27a"/><stop offset="0.391" stop-color="#34b489"/><stop offset="0.435" stop-color="#a6ddb6"/><stop offset="0.478" stop-color="#f4f9de"/><stop offset="0.522" stop-color="#fcf4c3"/><stop offset="0.565" stop-color="#fee3b1"/><stop offset="0.609" stop-color="#fdd39c"/><stop offset="0.652" stop-color="#fbc081"/><stop offset="0.696" stop-color="#f8af6b"/><stop offset="0.739" stop-color="#f79e57"/><stop offset="0.783" stop-color="#f58e42"/><stop offset="0.826" stop-color="#f38030"/><stop offset="0.870" stop-color="#f27321"/><stop offset="0.913" stop-color="#f06617"/><stop offset="0.957" stop-color="#ef5c12"/><stop offset="1.000" stop-color="#ef5810"/></linearGradient>
<linearGradient id="cg45" gradientUnits="userSpaceOnUse" x1="640.0" x2="777.5" y1="0" y2="0"><stop offset="0.000" stop-color="#00a3a4"/><stop offset="0.043" stop-color="#00a2a2"/><stop offset="0.087" stop-color="#00a29f"/><stop offset="0.130" stop-color="#00a19a"/><stop offset="0.174" stop-color="#00a095"/><stop offset="0.217" stop-color="#009f90"/><stop offset="0.261" stop-color="#009e89"/><stop offset="0.304" stop-color="#00a186"/><stop offset="0.348" stop-color="#1aab8b"/><stop offset="0.391" stop-color="#5dc5a3"/><stop offset="0.435" stop-color="#c0e8cc"/><stop offset="0.478" stop-color="#f9fade"/><stop offset="0.522" stop-color="#ffeec3"/><stop offset="0.565" stop-color="#fcd5ae"/><stop offset="0.609" stop-color="#fac095"/><stop offset="0.652" stop-color="#f9b27e"/><stop offset="0.696" stop-color="#f7a46a"/><stop offset="0.739" stop-color="#f59455"/><stop offset="0.783" stop-color="#f48540"/><stop offset="0.826" stop-color="#f2772e"/><stop offset="0.870" stop-color="#f16a20"/><stop offset="0.913" stop-color="#ef5d18"/><stop offset="0.957" stop-color="#ee5314"/><stop offset="1.000" stop-color="#ee5013"/></linearGradient>
<linearGradient id="cg46" gradientUnits="userSpaceOnUse" x1="640.5" x2="780.0" y1="0" y2="0"><stop offset="0.000" stop-color="#00a4a8"/><stop offset="0.043" stop-color="#00a3a7"/><stop offset="0.087" stop-color="#00a2a3"/><stop offset="0.130" stop-color="#00a19f"/><stop offset="0.174" stop-color="#00a09b"/><stop offset="0.217" stop-color="#009f95"/><stop offset="0.261" stop-color="#00a090"/><stop offset="0.304" stop-color="#0aa691"/><stop offset="0.348" stop-color="#34b69e"/><stop offset="0.391" stop-color="#80d3bb"/><stop offset="0.435" stop-color="#d3f0db"/><stop offset="0.478" stop-color="#faf8de"/><stop offset="0.522" stop-color="#fee5c6"/><stop offset="0.565" stop-color="#fbcbac"/><stop offset="0.609" stop-color="#f8b18d"/><stop offset="0.652" stop-color="#f7a67a"/><stop offset="0.696" stop-color="#f69866"/><stop offset="0.739" stop-color="#f48850"/><stop offset="0.783" stop-color="#f37a3b"/><stop offset="0.826" stop-color="#f16d2a"/><stop offset="0.870" stop-color="#ef5f1f"/><stop offset="0.913" stop-color="#ee5219"/><stop offset="0.957" stop-color="#ed4a15"/><stop offset="1.000" stop-color="#ed4714"/></linearGradient>
<linearGradient id="cg47" gradientUnits="userSpaceOnUse" x1="641.0" x2="782.0" y1="0" y2="0"><stop offset="0.000" stop-color="#00a5ad"/><stop offset="0.042" stop-color="#00a4ac"/><stop offset="0.083" stop-color="#00a3a7"/><stop offset="0.125" stop-color="#00a2a4"/><stop offset="0.167" stop-color="#00a1a1"/><stop offset="0.208" stop-color="#00a09d"/><stop offset="0.250" stop-color="#00a098"/><stop offset="0.292" stop-color="#0aa699"/><stop offset="0.333" stop-color="#35b7a7"/><stop offset="0.375" stop-color="#7cd3c1"/><stop offset="0.417" stop-color="#c7edde"/><stop offset="0.458" stop-color="#f4f8e7"/><stop offset="0.500" stop-color="#ffedd8"/><stop offset="0.542" stop-color="#fcdac3"/><stop offset="0.583" stop-color="#f8b497"/><stop offset="0.625" stop-color="#f7a381"/><stop offset="0.667" stop-color="#f59872"/><stop offset="0.708" stop-color="#f4885b"/><stop offset="0.750" stop-color="#f37946"/><stop offset="0.792" stop-color="#f16d33"/><stop offset="0.833" stop-color="#f06225"/><stop offset="0.875" stop-color="#ee531e"/><stop offset="0.917" stop-color="#ed4719"/><stop offset="0.958" stop-color="#ec4116"/><stop offset="1.000" stop-color="#ec3f15"/></linearGradient>
<linearGradient id="cg48" gradientUnits="userSpaceOnUse" x1="641.0" x2="784.5" y1="0" y2="0"><stop offset="0.000" stop-color="#00a5b1"/><stop offset="0.042" stop-color="#00a5b0"/><stop offset="0.083" stop-color="#00a4ac"/><stop offset="0.125" stop-color="#00a2a9"/><stop offset="0.167" stop-color="#00a1a6"/><stop offset="0.208" stop-color="#00a0a2"/><stop offset="0.250" stop-color="#00a09e"/><stop offset="0.292" stop-color="#0ca8a1"/><stop offset="0.333" stop-color="#45beb4"/><stop offset="0.375" stop-color="#95dcd2"/><stop offset="0.417" stop-color="#d9f4eb"/><stop offset="0.458" stop-color="#fbf8ee"/><stop offset="0.500" stop-color="#ffe8da"/><stop offset="0.542" stop-color="#fccfbd"/><stop offset="0.583" stop-color="#f8ab92"/><stop offset="0.625" stop-color="#f6997e"/><stop offset="0.667" stop-color="#f48b6c"/><stop offset="0.708" stop-color="#f37b56"/><stop offset="0.750" stop-color="#f26e41"/><stop offset="0.792" stop-color="#f0632f"/><stop offset="0.833" stop-color="#ee5624"/><stop offset="0.875" stop-color="#ed481e"/><stop offset="0.917" stop-color="#ec3e1a"/><stop offset="0.958" stop-color="#eb3a17"/><stop offset="1.000" stop-color="#eb3916"/></linearGradient>
<linearGradient id="cg49" gradientUnits="userSpaceOnUse" x1="641.5" x2="786.5" y1="0" y2="0"><stop offset="0.000" stop-color="#00a6b4"/><stop offset="0.042" stop-color="#00a6b3"/><stop offset="0.083" stop-color="#00a5b0"/><stop offset="0.125" stop-color="#00a3ae"/><stop offset="0.167" stop-color="#00a1ab"/><stop offset="0.208" stop-color="#00a0a7"/><stop offset="0.250" stop-color="#00a0a3"/><stop offset="0.292" stop-color="#0da9a7"/><stop offset="0.333" stop-color="#58c5c1"/><stop offset="0.375" stop-color="#b1e7e1"/><stop offset="0.417" stop-color="#ebfbf7"/><stop offset="0.458" stop-color="#fff6f2"/><stop offset="0.500" stop-color="#ffdfd7"/><stop offset="0.542" stop-color="#fbbfb3"/><stop offset="0.583" stop-color="#f7a08f"/><stop offset="0.625" stop-color="#f58d79"/><stop offset="0.667" stop-color="#f37d65"/><stop offset="0.708" stop-color="#f26f50"/><stop offset="0.750" stop-color="#f0623d"/><stop offset="0.792" stop-color="#ef572e"/><stop offset="0.833" stop-color="#ed4b24"/><stop offset="0.875" stop-color="#ec401f"/><stop offset="0.917" stop-color="#eb381b"/><stop offset="0.958" stop-color="#ea3419"/><stop offset="1.000" stop-color="#ea3318"/></linearGradient>
<linearGradient id="cg50" gradientUnits="userSpaceOnUse" x1="642.0" x2="789.0" y1="0" y2="0"><stop offset="0.000" stop-color="#00a6b7"/><stop offset="0.042" stop-color="#00a6b7"/><stop offset="0.083" stop-color="#00a5b5"/><stop offset="0.125" stop-color="#00a4b3"/><stop offset="0.167" stop-color="#00a2b1"/><stop offset="0.208" stop-color="#00a0ad"/><stop offset="0.250" stop-color="#00a0a8"/><stop offset="0.292" stop-color="#0ca8ac"/><stop offset="0.333" stop-color="#75cfd1"/><stop offset="0.375" stop-color="#d2f2f0"/><stop offset="0.417" stop-color="#fafefe"/><stop offset="0.458" stop-color="#ffeeee"/><stop offset="0.500" stop-color="#fdd0cd"/><stop offset="0.542" stop-color="#f8aea7"/><stop offset="0.583" stop-color="#f59288"/><stop offset="0.625" stop-color="#f37e72"/><stop offset="0.667" stop-color="#f26f5e"/><stop offset="0.708" stop-color="#f1614b"/><stop offset="0.750" stop-color="#ef5639"/><stop offset="0.792" stop-color="#ed4b2c"/><stop offset="0.833" stop-color="#ec4024"/><stop offset="0.875" stop-color="#eb381f"/><stop offset="0.917" stop-color="#ea321c"/><stop offset="0.958" stop-color="#e92f1a"/><stop offset="1.000" stop-color="#e92e1a"/></linearGradient>
<linearGradient id="cg51" gradientUnits="userSpaceOnUse" x1="642.5" x2="791.0" y1="0" y2="0"><stop offset="0.000" stop-color="#00a7bb"/><stop offset="0.040" stop-color="#00a7ba"/><stop offset="0.080" stop-color="#00a6ba"/><stop offset="0.120" stop-color="#00a4b9"/><stop offset="0.160" stop-color="#00a3b7"/><stop offset="0.200" stop-color="#00a1b4"/><stop offset="0.240" stop-color="#00a0af"/><stop offset="0.280" stop-color="#07a5b0"/><stop offset="0.320" stop-color="#6fccd5"/><stop offset="0.360" stop-color="#dbf3f5"/><stop offset="0.400" stop-color="#fcfefe"/><stop offset="0.440" stop-color="#fff0f2"/><stop offset="0.480" stop-color="#fdd1d4"/><stop offset="0.520" stop-color="#f8aeaf"/><stop offset="0.560" stop-color="#f59090"/><stop offset="0.600" stop-color="#f37b78"/><stop offset="0.640" stop-color="#f26b65"/><stop offset="0.680" stop-color="#f05d53"/><stop offset="0.720" stop-color="#ef5243"/><stop offset="0.760" stop-color="#ed4833"/><stop offset="0.800" stop-color="#ec3f2a"/><stop offset="0.840" stop-color="#eb3724"/><stop offset="0.880" stop-color="#ea3120"/><stop offset="0.920" stop-color="#e92d1d"/><stop offset="0.960" stop-color="#e82a1c"/><stop offset="1.000" stop-color="#e82a1c"/></linearGradient>
<linearGradient id="cg52" gradientUnits="userSpaceOnUse" x1="643.0" x2="793.5" y1="0" y2="0"><stop offset="0.000" stop-color="#00a8be"/><stop offset="0.040" stop-color="#00a8be"/><stop offset="0.080" stop-color="#00a7be"/><stop offset="0.120" stop-color="#00a5be"/><stop offset="0.160" stop-color="#00a3bd"/><stop offset="0.200" stop-color="#00a1ba"/><stop offset="0.240" stop-color="#00a3b8"/><stop offset="0.280" stop-color="#2bb2c3"/><stop offset="0.320" stop-color="#98d9e4"/><stop offset="0.360" stop-color="#f6fbfe"/><stop offset="0.400" stop-color="#fffcfc"/><stop offset="0.440" stop-color="#fce3ea"/><stop offset="0.480" stop-color="#f9bfc9"/><stop offset="0.520" stop-color="#f59aa3"/><stop offset="0.560" stop-color="#f37f87"/><stop offset="0.600" stop-color="#f16b72"/><stop offset="0.640" stop-color="#f05c5f"/><stop offset="0.680" stop-color="#ef5050"/><stop offset="0.720" stop-color="#ee4640"/><stop offset="0.760" stop-color="#ec3d31"/><stop offset="0.800" stop-color="#eb362b"/><stop offset="0.840" stop-color="#ea3025"/><stop offset="0.880" stop-color="#e92c21"/><stop offset="0.920" stop-color="#e8291e"/><stop offset="0.960" stop-color="#e8281c"/><stop offset="1.000" stop-color="#e82b1a"/></linearGradient>
<linearGradient id="cg53" gradientUnits="userSpaceOnUse" x1="643.5" x2="795.5" y1="0" y2="0"><stop offset="0.000" stop-color="#00a8c4"/><stop offset="0.040" stop-color="#00a8c3"/><stop offset="0.080" stop-color="#00a7c3"/><stop offset="0.120" stop-color="#00a5c3"/><stop offset="0.160" stop-color="#00a3c3"/><stop offset="0.200" stop-color="#00a1c0"/><stop offset="0.240" stop-color="#09a6c1"/><stop offset="0.280" stop-color="#49bcd1"/><stop offset="0.320" stop-color="#afdfec"/><stop offset="0.360" stop-color="#f3f6fc"/><stop offset="0.400" stop-color="#fef3f7"/><stop offset="0.440" stop-color="#fad6e2"/><stop offset="0.480" stop-color="#f7afc1"/><stop offset="0.520" stop-color="#f38a9d"/><stop offset="0.560" stop-color="#f16f83"/><stop offset="0.600" stop-color="#f05c6f"/><stop offset="0.640" stop-color="#ef4f5e"/><stop offset="0.680" stop-color="#ee454f"/><stop offset="0.720" stop-color="#ed3d40"/><stop offset="0.760" stop-color="#eb3535"/><stop offset="0.800" stop-color="#ea2f2e"/><stop offset="0.840" stop-color="#e92b28"/><stop offset="0.880" stop-color="#e82823"/><stop offset="0.920" stop-color="#e8281e"/><stop offset="0.960" stop-color="#e82b1a"/><stop offset="1.000" stop-color="#e82e17"/></linearGradient>
<linearGradient id="cg54" gradientUnits="userSpaceOnUse" x1="644.0" x2="798.0" y1="0" y2="0"><stop offset="0.000" stop-color="#00a8c6"/><stop offset="0.038" stop-color="#00a8c6"/><stop offset="0.077" stop-color="#00a7c7"/><stop offset="0.115" stop-color="#00a5c8"/><stop offset="0.154" stop-color="#00a3c8"/><stop offset="0.192" stop-color="#00a1c6"/><stop offset="0.231" stop-color="#08a5c7"/><stop offset="0.269" stop-color="#4cbbd7"/><stop offset="0.308" stop-color="#a9daec"/><stop offset="0.346" stop-color="#e9eef9"/><stop offset="0.385" stop-color="#fcecf5"/><stop offset="0.423" stop-color="#fbd4e4"/><stop offset="0.462" stop-color="#f7afc8"/><stop offset="0.500" stop-color="#f488a6"/><stop offset="0.538" stop-color="#f16b8b"/><stop offset="0.577" stop-color="#f05676"/><stop offset="0.615" stop-color="#ef4966"/><stop offset="0.654" stop-color="#ee4058"/><stop offset="0.692" stop-color="#ec394b"/><stop offset="0.731" stop-color="#eb3240"/><stop offset="0.769" stop-color="#ea2d37"/><stop offset="0.808" stop-color="#e92930"/><stop offset="0.846" stop-color="#e8262a"/><stop offset="0.885" stop-color="#e72723"/><stop offset="0.923" stop-color="#e8291d"/><stop offset="0.962" stop-color="#e82e17"/><stop offset="1.000" stop-color="#e73015"/></linearGradient>
<linearGradient id="cg55" gradientUnits="userSpaceOnUse" x1="644.5" x2="799.5" y1="0" y2="0"><stop offset="0.000" stop-color="#00a8c9"/><stop offset="0.038" stop-color="#00a8ca"/><stop offset="0.077" stop-color="#00a7cc"/><stop offset="0.115" stop-color="#00a5cd"/><stop offset="0.154" stop-color="#00a2cd"/><stop offset="0.192" stop-color="#00a0cb"/><stop offset="0.231" stop-color="#09a4cc"/><stop offset="0.269" stop-color="#62bedf"/><stop offset="0.308" stop-color="#bcdcf1"/><stop offset="0.346" stop-color="#ede9f7"/><stop offset="0.385" stop-color="#fbe0ef"/><stop offset="0.423" stop-color="#fac4db"/><stop offset="0.462" stop-color="#f69dbe"/><stop offset="0.500" stop-color="#f278a0"/><stop offset="0.538" stop-color="#f05b88"/><stop offset="0.577" stop-color="#ef4975"/><stop offset="0.615" stop-color="#ee3e66"/><stop offset="0.654" stop-color="#ed375a"/><stop offset="0.692" stop-color="#ec324f"/><stop offset="0.731" stop-color="#eb2d45"/><stop offset="0.769" stop-color="#e9283c"/><stop offset="0.808" stop-color="#e82534"/><stop offset="0.846" stop-color="#e7242c"/><stop offset="0.885" stop-color="#e72624"/><stop offset="0.923" stop-color="#e72a1d"/><stop offset="0.962" stop-color="#e72f17"/><stop offset="1.000" stop-color="#e73114"/></linearGradient>
<linearGradient id="cg56" gradientUnits="userSpaceOnUse" x1="645.0" x2="799.5" y1="0" y2="0"><stop offset="0.000" stop-color="#00a8cb"/><stop offset="0.038" stop-color="#00a8cc"/><stop offset="0.077" stop-color="#00a7d0"/><stop offset="0.115" stop-color="#00a4d1"/><stop offset="0.154" stop-color="#00a1d2"/><stop offset="0.192" stop-color="#009fcf"/><stop offset="0.231" stop-color="#0da2d0"/><stop offset="0.269" stop-color="#76bfe5"/><stop offset="0.308" stop-color="#cbddf3"/><stop offset="0.346" stop-color="#efe3f4"/><stop offset="0.385" stop-color="#f8d6ea"/><stop offset="0.423" stop-color="#f9b8d4"/><stop offset="0.462" stop-color="#f58eb7"/><stop offset="0.500" stop-color="#f16b9d"/><stop offset="0.538" stop-color="#ef4e88"/><stop offset="0.577" stop-color="#ee3e77"/><stop offset="0.615" stop-color="#ed3569"/><stop offset="0.654" stop-color="#ec305e"/><stop offset="0.692" stop-color="#eb2c54"/><stop offset="0.731" stop-color="#ea294c"/><stop offset="0.769" stop-color="#e92541"/><stop offset="0.808" stop-color="#e82338"/><stop offset="0.846" stop-color="#e7232f"/><stop offset="0.885" stop-color="#e72526"/><stop offset="0.923" stop-color="#e7291f"/><stop offset="0.962" stop-color="#e72e19"/><stop offset="1.000" stop-color="#e63016"/></linearGradient>
<linearGradient id="cg57" gradientUnits="userSpaceOnUse" x1="645.5" x2="795.0" y1="0" y2="0"><stop offset="0.000" stop-color="#00a8cd"/><stop offset="0.040" stop-color="#00a7ce"/><stop offset="0.080" stop-color="#00a5d3"/><stop offset="0.120" stop-color="#00a2d5"/><stop offset="0.160" stop-color="#00a0d7"/><stop offset="0.200" stop-color="#089ed3"/><stop offset="0.240" stop-color="#2fa7d8"/><stop offset="0.280" stop-color="#90c2e9"/><stop offset="0.320" stop-color="#dadcf3"/><stop offset="0.360" stop-color="#f0daf0"/><stop offset="0.400" stop-color="#f5c8e3"/><stop offset="0.440" stop-color="#f7a7cb"/><stop offset="0.480" stop-color="#f27aab"/><stop offset="0.520" stop-color="#f05c97"/><stop offset="0.560" stop-color="#ee4085"/><stop offset="0.600" stop-color="#ed3576"/><stop offset="0.640" stop-color="#ec2d6a"/><stop offset="0.680" stop-color="#ec2b60"/><stop offset="0.720" stop-color="#eb2858"/><stop offset="0.760" stop-color="#ea254f"/><stop offset="0.800" stop-color="#e92343"/><stop offset="0.840" stop-color="#e82139"/><stop offset="0.880" stop-color="#e62230"/><stop offset="0.920" stop-color="#e62527"/><stop offset="0.960" stop-color="#e72920"/><stop offset="1.000" stop-color="#e72b1d"/></linearGradient>
<linearGradient id="cg58" gradientUnits="userSpaceOnUse" x1="646.0" x2="790.0" y1="0" y2="0"><stop offset="0.000" stop-color="#00a5cf"/><stop offset="0.042" stop-color="#00a4d1"/><stop offset="0.083" stop-color="#01a2d4"/><stop offset="0.125" stop-color="#029fd6"/><stop offset="0.167" stop-color="#079dd7"/><stop offset="0.208" stop-color="#199ed5"/><stop offset="0.250" stop-color="#49a8db"/><stop offset="0.292" stop-color="#9abfe7"/><stop offset="0.333" stop-color="#d7d1ed"/><stop offset="0.375" stop-color="#eccde9"/><stop offset="0.417" stop-color="#efb8db"/><stop offset="0.458" stop-color="#f396c2"/><stop offset="0.500" stop-color="#f16fa7"/><stop offset="0.542" stop-color="#f05294"/><stop offset="0.583" stop-color="#ee3b84"/><stop offset="0.625" stop-color="#ed2f76"/><stop offset="0.667" stop-color="#ec296b"/><stop offset="0.708" stop-color="#eb2762"/><stop offset="0.750" stop-color="#ea255a"/><stop offset="0.792" stop-color="#ea2351"/><stop offset="0.833" stop-color="#e92145"/><stop offset="0.875" stop-color="#e8203b"/><stop offset="0.917" stop-color="#e72231"/><stop offset="0.958" stop-color="#e72529"/><stop offset="1.000" stop-color="#e72625"/></linearGradient>
<linearGradient id="cg59" gradientUnits="userSpaceOnUse" x1="646.5" x2="785.5" y1="0" y2="0"><stop offset="0.000" stop-color="#00a1d1"/><stop offset="0.043" stop-color="#00a1d2"/><stop offset="0.087" stop-color="#029ed5"/><stop offset="0.130" stop-color="#059bd6"/><stop offset="0.174" stop-color="#1099d5"/><stop offset="0.217" stop-color="#2a9cd6"/><stop offset="0.261" stop-color="#5da6db"/><stop offset="0.304" stop-color="#a0b8e3"/><stop offset="0.348" stop-color="#d2c2e6"/><stop offset="0.391" stop-color="#e6bce1"/><stop offset="0.435" stop-color="#eda6d1"/><stop offset="0.478" stop-color="#f085b9"/><stop offset="0.522" stop-color="#f064a3"/><stop offset="0.565" stop-color="#ef4a91"/><stop offset="0.609" stop-color="#ee3782"/><stop offset="0.652" stop-color="#ec2c76"/><stop offset="0.696" stop-color="#ec276b"/><stop offset="0.739" stop-color="#eb2462"/><stop offset="0.783" stop-color="#ea225a"/><stop offset="0.826" stop-color="#e92150"/><stop offset="0.870" stop-color="#e92045"/><stop offset="0.913" stop-color="#e8203b"/><stop offset="0.957" stop-color="#e72132"/><stop offset="1.000" stop-color="#e7232e"/></linearGradient>
<linearGradient id="cg60" gradientUnits="userSpaceOnUse" x1="647.0" x2="780.5" y1="0" y2="0"><stop offset="0.000" stop-color="#009ed2"/><stop offset="0.045" stop-color="#009dd4"/><stop offset="0.091" stop-color="#0399d4"/><stop offset="0.136" stop-color="#0995d4"/><stop offset="0.182" stop-color="#1994d4"/><stop offset="0.227" stop-color="#3897d4"/><stop offset="0.273" stop-color="#6aa1d9"/><stop offset="0.318" stop-color="#a3aede"/><stop offset="0.364" stop-color="#cdb4de"/><stop offset="0.409" stop-color="#e2abd7"/><stop offset="0.455" stop-color="#eb96c7"/><stop offset="0.500" stop-color="#ef78b2"/><stop offset="0.545" stop-color="#f05c9f"/><stop offset="0.591" stop-color="#ef448e"/><stop offset="0.636" stop-color="#ed3481"/><stop offset="0.682" stop-color="#ec2a76"/><stop offset="0.727" stop-color="#ec256c"/><stop offset="0.773" stop-color="#eb2363"/><stop offset="0.818" stop-color="#ea215a"/><stop offset="0.864" stop-color="#ea1f50"/><stop offset="0.909" stop-color="#e91f46"/><stop offset="0.955" stop-color="#e81f3c"/><stop offset="1.000" stop-color="#e82037"/></linearGradient>
<linearGradient id="cg61" gradientUnits="userSpaceOnUse" x1="648.0" x2="775.5" y1="0" y2="0"><stop offset="0.000" stop-color="#0099d4"/><stop offset="0.048" stop-color="#0198d4"/><stop offset="0.095" stop-color="#0493d3"/><stop offset="0.143" stop-color="#0e8fd2"/><stop offset="0.190" stop-color="#238ed1"/><stop offset="0.238" stop-color="#4692d1"/><stop offset="0.286" stop-color="#769bd5"/><stop offset="0.333" stop-color="#a7a3d8"/><stop offset="0.381" stop-color="#cca5d6"/><stop offset="0.429" stop-color="#e09bcd"/><stop offset="0.476" stop-color="#ea86be"/><stop offset="0.524" stop-color="#ee6cac"/><stop offset="0.571" stop-color="#ef539a"/><stop offset="0.619" stop-color="#ee3f8c"/><stop offset="0.667" stop-color="#ed317f"/><stop offset="0.714" stop-color="#ec2975"/><stop offset="0.762" stop-color="#eb256c"/><stop offset="0.810" stop-color="#eb2263"/><stop offset="0.857" stop-color="#ea205a"/><stop offset="0.905" stop-color="#ea1e50"/><stop offset="0.952" stop-color="#e91e46"/><stop offset="1.000" stop-color="#e91e41"/></linearGradient>
<linearGradient id="cg62" gradientUnits="userSpaceOnUse" x1="648.5" x2="771.0" y1="0" y2="0"><stop offset="0.000" stop-color="#0095d4"/><stop offset="0.050" stop-color="#0192d3"/><stop offset="0.100" stop-color="#058dd1"/><stop offset="0.150" stop-color="#1189ce"/><stop offset="0.200" stop-color="#2987cd"/><stop offset="0.250" stop-color="#508bcd"/><stop offset="0.300" stop-color="#7e92d0"/><stop offset="0.350" stop-color="#aa98d1"/><stop offset="0.400" stop-color="#cb98ce"/><stop offset="0.450" stop-color="#df8cc4"/><stop offset="0.500" stop-color="#e979b6"/><stop offset="0.550" stop-color="#ee61a5"/><stop offset="0.600" stop-color="#ef4b95"/><stop offset="0.650" stop-color="#ee3a88"/><stop offset="0.700" stop-color="#ed2e7d"/><stop offset="0.750" stop-color="#ec2874"/><stop offset="0.800" stop-color="#eb246b"/><stop offset="0.850" stop-color="#eb2162"/><stop offset="0.900" stop-color="#ea1f59"/><stop offset="0.950" stop-color="#ea1e4f"/><stop offset="1.000" stop-color="#ea1d4a"/></linearGradient>
<linearGradient id="cg63" gradientUnits="userSpaceOnUse" x1="649.0" x2="766.0" y1="0" y2="0"><stop offset="0.000" stop-color="#008fd2"/><stop offset="0.050" stop-color="#008dd1"/><stop offset="0.100" stop-color="#0587ce"/><stop offset="0.150" stop-color="#1082cb"/><stop offset="0.200" stop-color="#287fc8"/><stop offset="0.250" stop-color="#4c81c7"/><stop offset="0.300" stop-color="#7787c9"/><stop offset="0.350" stop-color="#a08ccb"/><stop offset="0.400" stop-color="#c18dc9"/><stop offset="0.450" stop-color="#d886c2"/><stop offset="0.500" stop-color="#e577b6"/><stop offset="0.550" stop-color="#ec63a7"/><stop offset="0.600" stop-color="#ee5099"/><stop offset="0.650" stop-color="#ee3f8d"/><stop offset="0.700" stop-color="#ed3283"/><stop offset="0.750" stop-color="#ec2b7a"/><stop offset="0.800" stop-color="#eb2671"/><stop offset="0.850" stop-color="#eb2369"/><stop offset="0.900" stop-color="#eb2060"/><stop offset="0.950" stop-color="#eb1e58"/><stop offset="1.000" stop-color="#ea1e54"/></linearGradient>
<linearGradient id="cg64" gradientUnits="userSpaceOnUse" x1="650.0" x2="761.5" y1="0" y2="0"><stop offset="0.000" stop-color="#0089cf"/><stop offset="0.053" stop-color="#0086ce"/><stop offset="0.105" stop-color="#057fcb"/><stop offset="0.158" stop-color="#1279c6"/><stop offset="0.211" stop-color="#2d77c2"/><stop offset="0.263" stop-color="#5579c1"/><stop offset="0.316" stop-color="#817ec4"/><stop offset="0.368" stop-color="#a783c5"/><stop offset="0.421" stop-color="#c583c2"/><stop offset="0.474" stop-color="#db7bba"/><stop offset="0.526" stop-color="#e76bad"/><stop offset="0.579" stop-color="#ec59a0"/><stop offset="0.632" stop-color="#ee4794"/><stop offset="0.684" stop-color="#ed3989"/><stop offset="0.737" stop-color="#ec2f81"/><stop offset="0.789" stop-color="#ec2978"/><stop offset="0.842" stop-color="#eb2670"/><stop offset="0.895" stop-color="#eb2368"/><stop offset="0.947" stop-color="#eb205f"/><stop offset="1.000" stop-color="#eb1e5b"/></linearGradient>
<linearGradient id="cg65" gradientUnits="userSpaceOnUse" x1="650.5" x2="756.5" y1="0" y2="0"><stop offset="0.000" stop-color="#0083cd"/><stop offset="0.056" stop-color="#0080cc"/><stop offset="0.111" stop-color="#0378c8"/><stop offset="0.167" stop-color="#1071c1"/><stop offset="0.222" stop-color="#2f6dbc"/><stop offset="0.278" stop-color="#5c6fbb"/><stop offset="0.333" stop-color="#8875be"/><stop offset="0.389" stop-color="#ab7ac0"/><stop offset="0.444" stop-color="#c87abc"/><stop offset="0.500" stop-color="#dd71b4"/><stop offset="0.556" stop-color="#e862a7"/><stop offset="0.611" stop-color="#ed509a"/><stop offset="0.667" stop-color="#ed408f"/><stop offset="0.722" stop-color="#ed3487"/><stop offset="0.778" stop-color="#ec2c7f"/><stop offset="0.833" stop-color="#eb2878"/><stop offset="0.889" stop-color="#eb2670"/><stop offset="0.944" stop-color="#eb2267"/><stop offset="1.000" stop-color="#eb2063"/></linearGradient>
<linearGradient id="cg66" gradientUnits="userSpaceOnUse" x1="651.5" x2="751.5" y1="0" y2="0"><stop offset="0.000" stop-color="#007dca"/><stop offset="0.059" stop-color="#0079c9"/><stop offset="0.118" stop-color="#0270c4"/><stop offset="0.176" stop-color="#0f68bb"/><stop offset="0.235" stop-color="#3465b5"/><stop offset="0.294" stop-color="#6667b5"/><stop offset="0.353" stop-color="#916db9"/><stop offset="0.412" stop-color="#b073bc"/><stop offset="0.471" stop-color="#cd71b7"/><stop offset="0.529" stop-color="#e068ad"/><stop offset="0.588" stop-color="#e958a0"/><stop offset="0.647" stop-color="#ed4894"/><stop offset="0.706" stop-color="#ed398b"/><stop offset="0.765" stop-color="#ec3084"/><stop offset="0.824" stop-color="#eb2a7e"/><stop offset="0.882" stop-color="#eb2677"/><stop offset="0.941" stop-color="#eb246f"/><stop offset="1.000" stop-color="#eb236b"/></linearGradient>
<linearGradient id="cg67" gradientUnits="userSpaceOnUse" x1="652.0" x2="747.0" y1="0" y2="0"><stop offset="0.000" stop-color="#0079c8"/><stop offset="0.062" stop-color="#0074c7"/><stop offset="0.125" stop-color="#036ac1"/><stop offset="0.188" stop-color="#1061b6"/><stop offset="0.250" stop-color="#3b5eb0"/><stop offset="0.312" stop-color="#6f61b1"/><stop offset="0.375" stop-color="#9767b5"/><stop offset="0.438" stop-color="#b56cb8"/><stop offset="0.500" stop-color="#d16ab2"/><stop offset="0.562" stop-color="#e35fa8"/><stop offset="0.625" stop-color="#eb4f9a"/><stop offset="0.688" stop-color="#ed4090"/><stop offset="0.750" stop-color="#ec3388"/><stop offset="0.812" stop-color="#ec2c82"/><stop offset="0.875" stop-color="#eb287d"/><stop offset="0.938" stop-color="#ec2575"/><stop offset="1.000" stop-color="#ec2471"/></linearGradient>
<linearGradient id="cg68" gradientUnits="userSpaceOnUse" x1="653.0" x2="742.0" y1="0" y2="0"><stop offset="0.000" stop-color="#0074c7"/><stop offset="0.067" stop-color="#0170c4"/><stop offset="0.133" stop-color="#0865bc"/><stop offset="0.200" stop-color="#1c5db4"/><stop offset="0.267" stop-color="#465bae"/><stop offset="0.333" stop-color="#765daf"/><stop offset="0.400" stop-color="#9d62b2"/><stop offset="0.467" stop-color="#bb65b2"/><stop offset="0.533" stop-color="#d562ad"/><stop offset="0.600" stop-color="#e457a3"/><stop offset="0.667" stop-color="#ec4897"/><stop offset="0.733" stop-color="#ee3b8e"/><stop offset="0.800" stop-color="#ed3186"/><stop offset="0.867" stop-color="#ed2a81"/><stop offset="0.933" stop-color="#ec267b"/><stop offset="1.000" stop-color="#ec2577"/></linearGradient>
<linearGradient id="cg69" gradientUnits="userSpaceOnUse" x1="653.5" x2="737.5" y1="0" y2="0"><stop offset="0.000" stop-color="#0070c4"/><stop offset="0.071" stop-color="#026bc1"/><stop offset="0.143" stop-color="#0d62b9"/><stop offset="0.214" stop-color="#275bb2"/><stop offset="0.286" stop-color="#5058ae"/><stop offset="0.357" stop-color="#7c5aae"/><stop offset="0.429" stop-color="#a25eaf"/><stop offset="0.500" stop-color="#c15fae"/><stop offset="0.571" stop-color="#d95aa8"/><stop offset="0.643" stop-color="#e64f9f"/><stop offset="0.714" stop-color="#ed4294"/><stop offset="0.786" stop-color="#ee378c"/><stop offset="0.857" stop-color="#ee2e85"/><stop offset="0.929" stop-color="#ed287f"/><stop offset="1.000" stop-color="#ed267c"/></linearGradient>
<linearGradient id="cg70" gradientUnits="userSpaceOnUse" x1="654.5" x2="732.5" y1="0" y2="0"><stop offset="0.000" stop-color="#006ac0"/><stop offset="0.077" stop-color="#0566bd"/><stop offset="0.154" stop-color="#155eb6"/><stop offset="0.231" stop-color="#3258b0"/><stop offset="0.308" stop-color="#5a56ac"/><stop offset="0.385" stop-color="#8458ac"/><stop offset="0.462" stop-color="#a95aad"/><stop offset="0.538" stop-color="#c759aa"/><stop offset="0.615" stop-color="#dc53a4"/><stop offset="0.692" stop-color="#e8499c"/><stop offset="0.769" stop-color="#ed3e92"/><stop offset="0.846" stop-color="#ef348b"/><stop offset="0.923" stop-color="#ee2c84"/><stop offset="1.000" stop-color="#ee2981"/></linearGradient>
<linearGradient id="cg71" gradientUnits="userSpaceOnUse" x1="655.5" x2="727.5" y1="0" y2="0"><stop offset="0.000" stop-color="#0165bc"/><stop offset="0.083" stop-color="#0762b9"/><stop offset="0.167" stop-color="#1c5bb3"/><stop offset="0.250" stop-color="#3c55ae"/><stop offset="0.333" stop-color="#6454ab"/><stop offset="0.417" stop-color="#8d55ab"/><stop offset="0.500" stop-color="#b056aa"/><stop offset="0.583" stop-color="#cd54a7"/><stop offset="0.667" stop-color="#e14da1"/><stop offset="0.750" stop-color="#ea4399"/><stop offset="0.833" stop-color="#ee3a91"/><stop offset="0.917" stop-color="#ef3189"/><stop offset="1.000" stop-color="#ef2e86"/></linearGradient>
<linearGradient id="cg72" gradientUnits="userSpaceOnUse" x1="656.0" x2="723.0" y1="0" y2="0"><stop offset="0.000" stop-color="#0261b9"/><stop offset="0.091" stop-color="#095eb6"/><stop offset="0.182" stop-color="#2158b1"/><stop offset="0.273" stop-color="#4452ab"/><stop offset="0.364" stop-color="#6d51a9"/><stop offset="0.455" stop-color="#9553a9"/><stop offset="0.545" stop-color="#b853a8"/><stop offset="0.636" stop-color="#d450a5"/><stop offset="0.727" stop-color="#e5489f"/><stop offset="0.818" stop-color="#ec3e97"/><stop offset="0.909" stop-color="#ee368f"/><stop offset="1.000" stop-color="#ef328b"/></linearGradient>
<linearGradient id="cg73" gradientUnits="userSpaceOnUse" x1="657.0" x2="718.0" y1="0" y2="0"><stop offset="0.000" stop-color="#035db5"/><stop offset="0.100" stop-color="#0b5bb3"/><stop offset="0.200" stop-color="#2754ad"/><stop offset="0.300" stop-color="#4e4ea8"/><stop offset="0.400" stop-color="#774ea7"/><stop offset="0.500" stop-color="#9e50a8"/><stop offset="0.600" stop-color="#c051a7"/><stop offset="0.700" stop-color="#da4ca3"/><stop offset="0.800" stop-color="#e8449c"/><stop offset="0.900" stop-color="#ec3a94"/><stop offset="1.000" stop-color="#ee3691"/></linearGradient>
<linearGradient id="cg74" gradientUnits="userSpaceOnUse" x1="658.0" x2="713.5" y1="0" y2="0"><stop offset="0.000" stop-color="#0459b2"/><stop offset="0.111" stop-color="#0d57b1"/><stop offset="0.222" stop-color="#2f4fa9"/><stop offset="0.333" stop-color="#594aa4"/><stop offset="0.444" stop-color="#834ba5"/><stop offset="0.556" stop-color="#a84fa7"/><stop offset="0.667" stop-color="#c84ea5"/><stop offset="0.778" stop-color="#e048a0"/><stop offset="0.889" stop-color="#e83f99"/><stop offset="1.000" stop-color="#eb3b95"/></linearGradient>
<linearGradient id="cg75" gradientUnits="userSpaceOnUse" x1="659.5" x2="708.5" y1="0" y2="0"><stop offset="0.000" stop-color="#0655af"/><stop offset="0.125" stop-color="#1054ae"/><stop offset="0.250" stop-color="#3b47a2"/><stop offset="0.375" stop-color="#6645a1"/><stop offset="0.500" stop-color="#8e49a4"/><stop offset="0.625" stop-color="#b24da5"/><stop offset="0.750" stop-color="#cd4ca3"/><stop offset="0.875" stop-color="#df449e"/><stop offset="1.000" stop-color="#e4409a"/></linearGradient>
<linearGradient id="cg76" gradientUnits="userSpaceOnUse" x1="660.5" x2="703.5" y1="0" y2="0"><stop offset="0.000" stop-color="#0c4ea8"/><stop offset="0.143" stop-color="#1a4aa4"/><stop offset="0.286" stop-color="#47409b"/><stop offset="0.429" stop-color="#72409d"/><stop offset="0.571" stop-color="#9747a3"/><stop offset="0.714" stop-color="#b74ba4"/><stop offset="0.857" stop-color="#cf48a1"/><stop offset="1.000" stop-color="#d7449e"/></linearGradient>
<linearGradient id="cg77" gradientUnits="userSpaceOnUse" x1="662.0" x2="699.0" y1="0" y2="0"><stop offset="0.000" stop-color="#1944a0"/><stop offset="0.167" stop-color="#2b3e99"/><stop offset="0.333" stop-color="#573a98"/><stop offset="0.500" stop-color="#7f3e9c"/><stop offset="0.667" stop-color="#a045a1"/><stop offset="0.833" stop-color="#bc46a0"/><stop offset="1.000" stop-color="#c7459f"/></linearGradient>
<linearGradient id="cg78" gradientUnits="userSpaceOnUse" x1="663.0" x2="694.0" y1="0" y2="0"><stop offset="0.000" stop-color="#233c9a"/><stop offset="0.200" stop-color="#353896"/><stop offset="0.400" stop-color="#633797"/><stop offset="0.600" stop-color="#873c9b"/><stop offset="0.800" stop-color="#a4419e"/><stop offset="1.000" stop-color="#b1419e"/></linearGradient>
<linearGradient id="cg79" gradientUnits="userSpaceOnUse" x1="665.0" x2="689.5" y1="0" y2="0"><stop offset="0.000" stop-color="#343696"/><stop offset="0.250" stop-color="#4a3595"/><stop offset="0.500" stop-color="#733697"/><stop offset="0.750" stop-color="#8f3a9a"/><stop offset="1.000" stop-color="#9d3c9b"/></linearGradient>
<linearGradient id="cg80" gradientUnits="userSpaceOnUse" x1="667.5" x2="684.5" y1="0" y2="0"><stop offset="0.000" stop-color="#4d3496"/><stop offset="0.333" stop-color="#5e3396"/><stop offset="0.667" stop-color="#7c3597"/><stop offset="1.000" stop-color="#873697"/></linearGradient>
<linearGradient id="cg81" gradientUnits="userSpaceOnUse" x1="670.0" x2="679.5" y1="0" y2="0"><stop offset="0.000" stop-color="#5f3395"/><stop offset="0.500" stop-color="#683395"/><stop offset="1.000" stop-color="#713396"/></linearGradient>
</defs>
<g clip-path="url(#loc)"><g filter="url(#bl)">
<rect x="648.0" y="166" width="13.0" height="3.5" fill="url(#cg0)"/>
<rect x="644.0" y="169" width="23.0" height="3.5" fill="url(#cg1)"/>
<rect x="642.0" y="172" width="29.5" height="3.5" fill="url(#cg2)"/>
<rect x="640.5" y="175" width="34.5" height="3.5" fill="url(#cg3)"/>
<rect x="639.5" y="178" width="39.0" height="3.5" fill="url(#cg4)"/>
<rect x="638.5" y="181" width="43.5" height="3.5" fill="url(#cg5)"/>
<rect x="638.0" y="184" width="47.0" height="3.5" fill="url(#cg6)"/>
<rect x="637.5" y="187" width="50.5" height="3.5" fill="url(#cg7)"/>
<rect x="636.5" y="190" width="54.5" height="3.5" fill="url(#cg8)"/>
<rect x="636.5" y="193" width="57.5" height="3.5" fill="url(#cg9)"/>
<rect x="636.0" y="196" width="60.5" height="3.5" fill="url(#cg10)"/>
<rect x="635.5" y="199" width="63.5" height="3.5" fill="url(#cg11)"/>
<rect x="635.5" y="202" width="66.0" height="3.5" fill="url(#cg12)"/>
<rect x="635.0" y="205" width="69.0" height="3.5" fill="url(#cg13)"/>
<rect x="635.0" y="208" width="71.5" height="3.5" fill="url(#cg14)"/>
<rect x="635.0" y="211" width="74.0" height="3.5" fill="url(#cg15)"/>
<rect x="634.5" y="214" width="77.0" height="3.5" fill="url(#cg16)"/>
<rect x="634.5" y="217" width="79.0" height="3.5" fill="url(#cg17)"/>
<rect x="634.5" y="220" width="81.5" height="3.5" fill="url(#cg18)"/>
<rect x="634.5" y="223" width="84.0" height="3.5" fill="url(#cg19)"/>
<rect x="634.5" y="226" width="86.0" height="3.5" fill="url(#cg20)"/>
<rect x="634.5" y="229" width="88.5" height="3.5" fill="url(#cg21)"/>
<rect x="634.5" y="232" width="91.0" height="3.5" fill="url(#cg22)"/>
<rect x="634.5" y="235" width="93.0" height="3.5" fill="url(#cg23)"/>
<rect x="634.5" y="238" width="95.5" height="3.5" fill="url(#cg24)"/>
<rect x="635.0" y="241" width="97.0" height="3.5" fill="url(#cg25)"/>
<rect x="635.0" y="244" width="99.5" height="3.5" fill="url(#cg26)"/>
<rect x="635.0" y="247" width="102.0" height="3.5" fill="url(#cg27)"/>
<rect x="635.0" y="250" width="104.0" height="3.5" fill="url(#cg28)"/>
<rect x="635.5" y="253" width="106.0" height="3.5" fill="url(#cg29)"/>
<rect x="635.5" y="256" width="108.0" height="3.5" fill="url(#cg30)"/>
<rect x="636.0" y="259" width="110.0" height="3.5" fill="url(#cg31)"/>
<rect x="636.0" y="262" width="112.0" height="3.5" fill="url(#cg32)"/>
<rect x="636.0" y="265" width="114.5" height="3.5" fill="url(#cg33)"/>
<rect x="636.5" y="268" width="116.0" height="3.5" fill="url(#cg34)"/>
<rect x="636.5" y="271" width="118.5" height="3.5" fill="url(#cg35)"/>
<rect x="637.0" y="274" width="120.0" height="3.5" fill="url(#cg36)"/>
<rect x="637.5" y="277" width="122.0" height="3.5" fill="url(#cg37)"/>
<rect x="637.5" y="280" width="124.0" height="3.5" fill="url(#cg38)"/>
<rect x="638.0" y="283" width="126.0" height="3.5" fill="url(#cg39)"/>
<rect x="638.0" y="286" width="128.5" height="3.5" fill="url(#cg40)"/>
<rect x="638.5" y="289" width="130.0" height="3.5" fill="url(#cg41)"/>
<rect x="639.0" y="292" width="132.0" height="3.5" fill="url(#cg42)"/>
<rect x="639.5" y="295" width="133.5" height="3.5" fill="url(#cg43)"/>
<rect x="639.5" y="298" width="136.0" height="3.5" fill="url(#cg44)"/>
<rect x="640.0" y="301" width="137.5" height="3.5" fill="url(#cg45)"/>
<rect x="640.5" y="304" width="139.5" height="3.5" fill="url(#cg46)"/>
<rect x="641.0" y="307" width="141.0" height="3.5" fill="url(#cg47)"/>
<rect x="641.0" y="310" width="143.5" height="3.5" fill="url(#cg48)"/>
<rect x="641.5" y="313" width="145.0" height="3.5" fill="url(#cg49)"/>
<rect x="642.0" y="316" width="147.0" height="3.5" fill="url(#cg50)"/>
<rect x="642.5" y="319" width="148.5" height="3.5" fill="url(#cg51)"/>
<rect x="643.0" y="322" width="150.5" height="3.5" fill="url(#cg52)"/>
<rect x="643.5" y="325" width="152.0" height="3.5" fill="url(#cg53)"/>
<rect x="644.0" y="328" width="154.0" height="3.5" fill="url(#cg54)"/>
<rect x="644.5" y="331" width="155.0" height="3.5" fill="url(#cg55)"/>
<rect x="645.0" y="334" width="154.5" height="3.5" fill="url(#cg56)"/>
<rect x="645.5" y="337" width="149.5" height="3.5" fill="url(#cg57)"/>
<rect x="646.0" y="340" width="144.0" height="3.5" fill="url(#cg58)"/>
<rect x="646.5" y="343" width="139.0" height="3.5" fill="url(#cg59)"/>
<rect x="647.0" y="346" width="133.5" height="3.5" fill="url(#cg60)"/>
<rect x="648.0" y="349" width="127.5" height="3.5" fill="url(#cg61)"/>
<rect x="648.5" y="352" width="122.5" height="3.5" fill="url(#cg62)"/>
<rect x="649.0" y="355" width="117.0" height="3.5" fill="url(#cg63)"/>
<rect x="650.0" y="358" width="111.5" height="3.5" fill="url(#cg64)"/>
<rect x="650.5" y="361" width="106.0" height="3.5" fill="url(#cg65)"/>
<rect x="651.5" y="364" width="100.0" height="3.5" fill="url(#cg66)"/>
<rect x="652.0" y="367" width="95.0" height="3.5" fill="url(#cg67)"/>
<rect x="653.0" y="370" width="89.0" height="3.5" fill="url(#cg68)"/>
<rect x="653.5" y="373" width="84.0" height="3.5" fill="url(#cg69)"/>
<rect x="654.5" y="376" width="78.0" height="3.5" fill="url(#cg70)"/>
<rect x="655.5" y="379" width="72.0" height="3.5" fill="url(#cg71)"/>
<rect x="656.0" y="382" width="67.0" height="3.5" fill="url(#cg72)"/>
<rect x="657.0" y="385" width="61.0" height="3.5" fill="url(#cg73)"/>
<rect x="658.0" y="388" width="55.5" height="3.5" fill="url(#cg74)"/>
<rect x="659.5" y="391" width="49.0" height="3.5" fill="url(#cg75)"/>
<rect x="660.5" y="394" width="43.0" height="3.5" fill="url(#cg76)"/>
<rect x="662.0" y="397" width="37.0" height="3.5" fill="url(#cg77)"/>
<rect x="663.0" y="400" width="31.0" height="3.5" fill="url(#cg78)"/>
<rect x="665.0" y="403" width="24.5" height="3.5" fill="url(#cg79)"/>
<rect x="667.5" y="406" width="17.0" height="3.5" fill="url(#cg80)"/>
<rect x="670.0" y="409" width="9.5" height="3.5" fill="url(#cg81)"/>
</g></g>
<g stroke="#fff" stroke-opacity=".35" stroke-width="1" fill="none">
<path d="M636.5,149.0V411.9"/>
<path d="M636.0,411.4H833.9"/>
<path d="M658.4,149.0V411.9"/>
<path d="M636.0,382.3H833.9"/>
<path d="M680.3,149.0V411.9"/>
<path d="M636.0,353.2H833.9"/>
<path d="M702.1,149.0V411.9"/>
<path d="M636.0,324.1H833.9"/>
<path d="M724.0,149.0V411.9"/>
<path d="M636.0,295.0H833.9"/>
<path d="M745.9,149.0V411.9"/>
<path d="M636.0,265.9H833.9"/>
<path d="M767.8,149.0V411.9"/>
<path d="M636.0,236.8H833.9"/>
<path d="M789.7,149.0V411.9"/>
<path d="M636.0,207.7H833.9"/>
<path d="M811.5,149.0V411.9"/>
<path d="M636.0,178.6H833.9"/>
<path d="M833.4,149.0V411.9"/>
<path d="M636.0,149.5H833.9"/>
</g>
<g class="ax" text-anchor="end"><text x="633.8" y="414.0">0.0</text><text x="633.8" y="384.9">0.1</text><text x="633.8" y="355.8">0.2</text><text x="633.8" y="326.7">0.3</text><text x="633.8" y="297.6">0.4</text><text x="633.8" y="268.5">0.5</text><text x="633.8" y="239.4">0.6</text><text x="633.8" y="210.3">0.7</text><text x="633.8" y="181.2">0.8</text><text x="633.8" y="152.1">0.9</text></g>
<g class="ax" text-anchor="middle"><text x="636.5" y="420.4">0.0</text><text x="658.4" y="420.4">0.1</text><text x="680.3" y="420.4">0.2</text><text x="702.1" y="420.4">0.3</text><text x="724.0" y="420.4">0.4</text><text x="745.9" y="420.4">0.5</text><text x="767.8" y="420.4">0.6</text><text x="789.7" y="420.4">0.7</text><text x="811.5" y="420.4">0.8</text><text x="833.4" y="420.4">0.9</text></g>
<text class="ax" x="631.5" y="139.5" text-anchor="middle">y</text>
<text class="ax" x="843.5" y="413" text-anchor="middle">x</text>
<g class="wl" text-anchor="middle"><text x="651.7" y="162.6">520</text><text x="692.2" y="186.3">540</text><text x="718.7" y="224.0">560</text><text x="754.2" y="264.6">580</text><text x="783.0" y="300.6">600</text><text x="795.4" y="318.3">620</text><text x="805.4" y="330.7">700</text><text x="630.5" y="256.3">500</text><text x="642.0" y="332.2">490</text><text x="646.6" y="377.5">480</text><text x="653.0" y="399.2">470</text><text x="663.0" y="410.7">460</text><text x="670.0" y="418.0">380</text><path d="M652.8,168.8l-0.4,-3.0M686.7,191.9l1.7,-2.5M718.1,229.7l0.2,-3.0M748.6,269.8l1.8,-2.4M773.7,303.0l2.7,-1.3M787.8,321.7l2.4,-1.8M797.3,334.2l2.5,-1.7M638.3,254.7l-3.0,-0.2M646.4,325.6l-2.1,2.1M656.5,372.8l-2.9,0.7M663.7,394.6l-2.9,0.7M668.0,402.8l-2.0,2.3M674.6,410.0l-1.9,2.4" stroke="#0a5ea8" stroke-width=".8" fill="none"/></g>
<g stroke="#f00000" fill="none" stroke-width="1"><circle cx="705" cy="317" r="3.5"/><path d="M701.5,316.5H708.5M704.5,313.5V320.5" shape-rendering="crispEdges"/></g>
</svg>

<div class="abs ico" style="top:125px"></div>
<div class="abs ico" style="top:150px"></div>
<svg style="left:987px;top:125px" width="10" height="36" viewBox="0 0 10 36">
<g stroke="#000" fill="none" stroke-width="1"><circle cx="5" cy="5" r="3.5"/><path d="M1.5,4.5H8.5M4.5,1.5V8.5" shape-rendering="crispEdges"/></g>
<g stroke="#f00" fill="none" stroke-width="1"><circle cx="5" cy="30" r="3.5"/><path d="M1.5,29.5H8.5M4.5,26.5V33.5" shape-rendering="crispEdges"/></g>
</svg>
<div class="abs" id="ltarget" style="left:1002px;top:125px;font-size:11px;letter-spacing:.35px">Target</div>
<div class="abs" id="lach" style="left:1002px;top:150px;font-size:11px">Achieved</div>
<div class="abs radio" style="top:172px"></div>
<div class="abs" style="left:993px;top:176px;width:6px;height:6px;border-radius:50%;background:#e2e2e2"></div>
<div class="abs radio" style="top:195px"></div>
<div class="abs" id="lxy" style="left:1010.5px;top:173.5px;font-size:11px;letter-spacing:.5px">xy</div>
<div class="abs" id="luv" style="left:1010px;top:196.3px;font-size:11px;letter-spacing:-.1px">u'v'</div>

<div class="abs b" id="h1" style="left:710px;top:450px;letter-spacing:.5px">Target</div>
<div class="abs b" id="h2" style="left:844px;top:450px;letter-spacing:.2px">Achieved</div>
<div class="abs b" id="r1" style="left:574px;top:472px">White Point:</div>
<div class="abs" id="r1a" style="left:709.5px;top:472px;letter-spacing:.05px">CCT: CIE Illuminant D65K</div>
<div class="abs" id="r1b" style="left:843.5px;top:472px;letter-spacing:.25px">CCT: 6484K</div>
<div class="abs" id="r2a" style="left:709.5px;top:491px;letter-spacing:.3px">x: 0.313, y: 0.329</div>
<div class="abs" id="r2b" style="left:843.5px;top:491px;letter-spacing:.3px">x: 0.313, y: 0.330</div>
<div class="abs b" id="r3" style="left:574px;top:510px">Black Luminance:</div>
<div class="abs" id="r3a" style="left:709.5px;top:510px">Native</div>
<div class="abs" id="r3b" style="left:843.5px;top:510px;letter-spacing:.2px">0.116 cd/m²</div>
<div class="abs b" id="r4" style="left:574px;top:529px">Luminance:</div>
<div class="abs" id="r4a" style="left:710.5px;top:529px">120 cd/m²</div>
<div class="abs" id="r4b" style="left:844.5px;top:529px">121 cd/m²</div>
<div class="abs b" id="r5" style="left:574px;top:548px;letter-spacing:.15px">Contrast Ratio:</div>
<div class="abs" id="r5a" style="left:709.5px;top:548px">Native</div>
<div class="abs" id="r5b" style="left:844.5px;top:548px;letter-spacing:.15px">1040.92:1</div>

<div class="abs btn" id="b1" style="left:632px;letter-spacing:.1px">Save Profile</div>
<div class="abs btn" id="b2" style="left:763px">Compare profile</div>
</body></html>
